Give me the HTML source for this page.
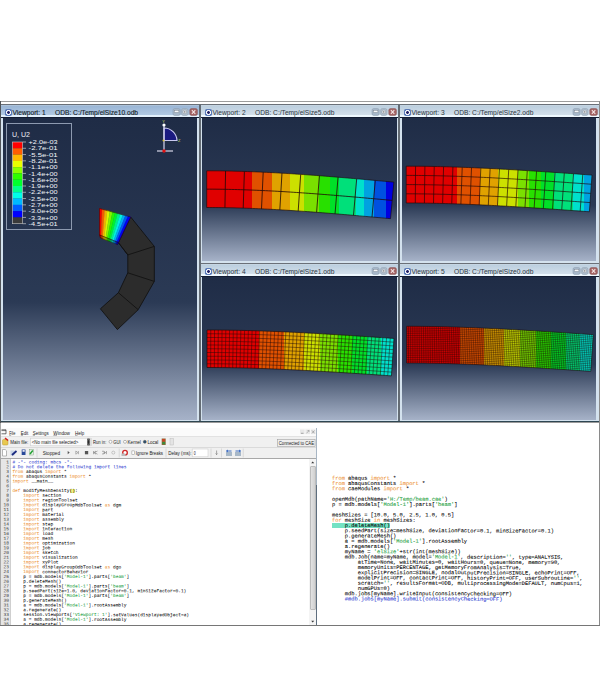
<!DOCTYPE html><html><head><meta charset="utf-8"><style>
*{box-sizing:border-box;margin:0;padding:0}
html,body{width:600px;height:687px;background:#fff;overflow:hidden;position:relative;font-family:"Liberation Sans",sans-serif}
.a{position:absolute}
.vp{position:absolute;background:#d4e2ee}
.tb{position:absolute;left:0;right:0;top:0;height:14px;border-top:1px solid #6a7078;background:linear-gradient(#d0dce6 0px,#bccfdf 1px,#d4e0eb 10.5px,#eef8ff 10.5px,#eef8ff 12px,#121c32 12px,#121c32 13px)}
.tb.act{background:linear-gradient(#c0d0e0 0px,#9ab6d6 1px,#b2cae3 10.5px,#e2f0fc 10.5px,#e2f0fc 12px,#121c32 12px,#121c32 13px)}
.tt{position:absolute;top:3.4px;font-size:6.65px;color:#2c3640;white-space:pre;line-height:9px}
.act .tt{color:#141c26;-webkit-text-stroke:0.12px #141c26}
.ic{position:absolute;left:3.5px;top:4px;width:7px;height:7px;border-radius:1.8px;background:radial-gradient(circle at 50% 50%,#24246a 0,#24246a 1.3px,#f4f6fa 1.5px,#f4f6fa 2.4px,#5a7ab8 2.8px)}
.bg{position:absolute;background:linear-gradient(#1f2c46 0%,#2b3a55 61%,#a6b2c8 100%);overflow:hidden}
.bg svg{position:absolute;left:0;top:0}
.code{position:absolute;font-family:"Liberation Mono",monospace;white-space:pre;color:#000;-webkit-text-stroke:0.4px}
.k{color:#e5821a}.c{color:#2438c8}.s{color:#1f9a3c}
.mn{position:absolute;font-size:5.6px;color:#222;white-space:pre;line-height:8px}
</style></head><body><div class="a" style="left:0;top:101px;width:600px;height:1px;background:#9c9c9c"></div><div class="a" style="left:0;top:101px;width:1px;height:322px;background:#505458"></div><div class="a" style="left:0;top:423px;width:1px;height:203px;background:#a8a8a8"></div><div class="a" style="left:599px;top:101px;width:1px;height:525px;background:#8a8a8a"></div><div class="a" style="left:199px;top:104px;width:2px;height:318px;background:#646c74"></div><div class="a" style="left:398px;top:104px;width:2px;height:318px;background:#646c74"></div><div class="vp" style="left:1px;top:104px;width:198px;height:318px"><div class="tb act"><div class="ic"></div><div class="tt" style="left:11.5px">Viewport: 1</div><div class="tt" style="left:54px">ODB: C:/Temp/elSize10.odb</div><svg class="a" style="left:0;top:-1px" width="198" height="14" viewBox="0 0 198 14"><rect x="172.0" y="4.6" width="7.2" height="6.8" rx="1.6" fill="#a7b8ca" stroke="#8797a8" stroke-width="0.5"/><rect x="173.3" y="6.3" width="4.6" height="2.2" fill="#f6f8fa" stroke="#6a7480" stroke-width="0.4"/><rect x="180.6" y="4.6" width="6.4" height="6.8" rx="1.6" fill="#b0bfce" stroke="#8d9cac" stroke-width="0.5"/><rect x="182.1" y="6.2" width="3.4" height="3.4" rx="0.8" fill="#eceff3" stroke="#7a8490" stroke-width="0.4"/><circle cx="183.8" cy="7.9" r="0.7" fill="#555"/><rect x="188.8" y="4.6" width="7.6" height="6.8" rx="1.6" fill="#a46464" stroke="#845050" stroke-width="0.5"/><path d="M190.9,6.2 L194.3,9.8 M194.3,6.2 L190.9,9.8" stroke="#f4e4e4" stroke-width="1.1"/></svg></div><div class="bg" style="left:2px;top:14px;width:194px;height:302px"><svg width="194" height="302" viewBox="3 118 194 302"><rect x="6.5" y="123.5" width="65" height="106" fill="none" stroke="#8d9ab0" stroke-width="1"/><text x="12" y="137" font-family="Liberation Sans" font-size="6.3" textLength="18" lengthAdjust="spacingAndGlyphs" fill="#eef0f6">U, U2</text><rect x="12.5" y="142.00" width="10" height="6.38" fill="#ff0000"/><rect x="12.5" y="148.28" width="10" height="6.38" fill="#ff5d00"/><rect x="12.5" y="154.57" width="10" height="6.38" fill="#ffb900"/><rect x="12.5" y="160.85" width="10" height="6.38" fill="#e8ff00"/><rect x="12.5" y="167.14" width="10" height="6.38" fill="#8bff00"/><rect x="12.5" y="173.42" width="10" height="6.38" fill="#2eff00"/><rect x="12.5" y="179.71" width="10" height="6.38" fill="#00ff2e"/><rect x="12.5" y="185.99" width="10" height="6.38" fill="#00ff8b"/><rect x="12.5" y="192.28" width="10" height="6.38" fill="#00ffe8"/><rect x="12.5" y="198.56" width="10" height="6.38" fill="#00b9ff"/><rect x="12.5" y="204.85" width="10" height="6.38" fill="#005dff"/><rect x="12.5" y="211.13" width="10" height="6.38" fill="#0000ff"/><rect x="12.5" y="217.42" width="10" height="6.38" fill="#3a3a3a"/><rect x="12.5" y="142.00" width="10" height="81.70" fill="none" stroke="#c8c8c8" stroke-width="0.6"/><line x1="22.5" y1="142.00" x2="26" y2="142.00" stroke="#e0e0e0" stroke-width="0.6"/><text x="28.6" y="144.20" font-family="Liberation Sans" font-size="6.1" textLength="29" lengthAdjust="spacingAndGlyphs" fill="#f2f4f8">+2.0e-03</text><line x1="22.5" y1="148.28" x2="26" y2="148.28" stroke="#e0e0e0" stroke-width="0.6"/><text x="28.6" y="150.48" font-family="Liberation Sans" font-size="6.1" textLength="29" lengthAdjust="spacingAndGlyphs" fill="#f2f4f8">-2.7e-01</text><line x1="22.5" y1="154.57" x2="26" y2="154.57" stroke="#e0e0e0" stroke-width="0.6"/><text x="28.6" y="156.77" font-family="Liberation Sans" font-size="6.1" textLength="29" lengthAdjust="spacingAndGlyphs" fill="#f2f4f8">-5.5e-01</text><line x1="22.5" y1="160.85" x2="26" y2="160.85" stroke="#e0e0e0" stroke-width="0.6"/><text x="28.6" y="163.05" font-family="Liberation Sans" font-size="6.1" textLength="29" lengthAdjust="spacingAndGlyphs" fill="#f2f4f8">-8.2e-01</text><line x1="22.5" y1="167.14" x2="26" y2="167.14" stroke="#e0e0e0" stroke-width="0.6"/><text x="28.6" y="169.34" font-family="Liberation Sans" font-size="6.1" textLength="29" lengthAdjust="spacingAndGlyphs" fill="#f2f4f8">-1.1e+00</text><line x1="22.5" y1="173.42" x2="26" y2="173.42" stroke="#e0e0e0" stroke-width="0.6"/><text x="28.6" y="175.62" font-family="Liberation Sans" font-size="6.1" textLength="29" lengthAdjust="spacingAndGlyphs" fill="#f2f4f8">-1.4e+00</text><line x1="22.5" y1="179.71" x2="26" y2="179.71" stroke="#e0e0e0" stroke-width="0.6"/><text x="28.6" y="181.91" font-family="Liberation Sans" font-size="6.1" textLength="29" lengthAdjust="spacingAndGlyphs" fill="#f2f4f8">-1.6e+00</text><line x1="22.5" y1="185.99" x2="26" y2="185.99" stroke="#e0e0e0" stroke-width="0.6"/><text x="28.6" y="188.19" font-family="Liberation Sans" font-size="6.1" textLength="29" lengthAdjust="spacingAndGlyphs" fill="#f2f4f8">-1.9e+00</text><line x1="22.5" y1="192.28" x2="26" y2="192.28" stroke="#e0e0e0" stroke-width="0.6"/><text x="28.6" y="194.48" font-family="Liberation Sans" font-size="6.1" textLength="29" lengthAdjust="spacingAndGlyphs" fill="#f2f4f8">-2.2e+00</text><line x1="22.5" y1="198.56" x2="26" y2="198.56" stroke="#e0e0e0" stroke-width="0.6"/><text x="28.6" y="200.76" font-family="Liberation Sans" font-size="6.1" textLength="29" lengthAdjust="spacingAndGlyphs" fill="#f2f4f8">-2.5e+00</text><line x1="22.5" y1="204.85" x2="26" y2="204.85" stroke="#e0e0e0" stroke-width="0.6"/><text x="28.6" y="207.05" font-family="Liberation Sans" font-size="6.1" textLength="29" lengthAdjust="spacingAndGlyphs" fill="#f2f4f8">-2.7e+00</text><line x1="22.5" y1="211.13" x2="26" y2="211.13" stroke="#e0e0e0" stroke-width="0.6"/><text x="28.6" y="213.33" font-family="Liberation Sans" font-size="6.1" textLength="29" lengthAdjust="spacingAndGlyphs" fill="#f2f4f8">-3.0e+00</text><line x1="22.5" y1="217.42" x2="26" y2="217.42" stroke="#e0e0e0" stroke-width="0.6"/><text x="28.6" y="219.62" font-family="Liberation Sans" font-size="6.1" textLength="29" lengthAdjust="spacingAndGlyphs" fill="#f2f4f8">-3.3e+00</text><line x1="22.5" y1="223.70" x2="26" y2="223.70" stroke="#e0e0e0" stroke-width="0.6"/><text x="28.6" y="225.90" font-family="Liberation Sans" font-size="6.1" textLength="29" lengthAdjust="spacingAndGlyphs" fill="#f2f4f8">-4.5e+01</text><path d="M164,140.5 L164,128 A13,13 0 0 1 177,140.5 Z" fill="#1a1a80" stroke="#c8c8f0" stroke-width="1.2"/><line x1="164" y1="125" x2="164" y2="151" stroke="#d8d8f0" stroke-width="1.2"/><line x1="157" y1="151" x2="173" y2="151" stroke="#d8d8e8" stroke-width="1.2"/><circle cx="164" cy="125" r="1.6" fill="#fff"/><circle cx="164" cy="151" r="1.7" fill="#e01010"/><circle cx="163.5" cy="140.5" r="1" fill="#d8c040"/><text x="162.3" y="122.5" font-family="Liberation Sans" font-size="4" fill="#d0d860">Y</text><text x="178" y="142.3" font-family="Liberation Sans" font-size="4" fill="#d0d860">Z</text><polygon points="130.7,217.0 154.3,246.4 154.3,281.4 138.2,309.7 117.4,329.6 100.4,308.8 118.4,292.7 127.8,272.8 127.8,254.9 118.4,242.6" fill="#2c2c2c" stroke="#121212" stroke-width="0.9"/><path d="M118.4,242.6 L127.8,254.9 L154.3,246.4 M127.8,272.8 L154.3,281.4 M118.4,292.7 L138.2,309.7" stroke="#121212" stroke-width="0.9" fill="none"/><polygon points="99.50,208.50 102.10,209.21 101.08,235.63 99.50,235.00" fill="#f20000" stroke="#f20000" stroke-width="0.3"/><polygon points="102.10,209.21 104.70,209.92 102.65,236.27 101.08,235.63" fill="#f25800" stroke="#f25800" stroke-width="0.3"/><polygon points="104.70,209.92 107.30,210.62 104.22,236.90 102.65,236.27" fill="#f2af00" stroke="#f2af00" stroke-width="0.3"/><polygon points="107.30,210.62 109.90,211.33 105.80,237.53 104.22,236.90" fill="#dcf200" stroke="#dcf200" stroke-width="0.3"/><polygon points="109.90,211.33 112.50,212.04 107.38,238.17 105.80,237.53" fill="#84f200" stroke="#84f200" stroke-width="0.3"/><polygon points="112.50,212.04 115.10,212.75 108.95,238.80 107.38,238.17" fill="#2bf200" stroke="#2bf200" stroke-width="0.3"/><polygon points="115.10,212.75 117.70,213.46 110.53,239.43 108.95,238.80" fill="#00f22b" stroke="#00f22b" stroke-width="0.3"/><polygon points="117.70,213.46 120.30,214.17 112.10,240.07 110.53,239.43" fill="#00f284" stroke="#00f284" stroke-width="0.3"/><polygon points="120.30,214.17 122.90,214.88 113.68,240.70 112.10,240.07" fill="#00f2dc" stroke="#00f2dc" stroke-width="0.3"/><polygon points="122.90,214.88 125.50,215.58 115.25,241.33 113.68,240.70" fill="#00aff2" stroke="#00aff2" stroke-width="0.3"/><polygon points="125.50,215.58 128.10,216.29 116.83,241.97 115.25,241.33" fill="#0058f2" stroke="#0058f2" stroke-width="0.3"/><polygon points="128.10,216.29 130.70,217.00 118.40,242.60 116.83,241.97" fill="#0000f2" stroke="#0000f2" stroke-width="0.3"/><polygon points="99.5,208.5 130.7,217 118.4,242.6 99.5,235" fill="none" stroke="#300" stroke-width="0.5"/><polygon points="99.50,235.00 101.08,235.63 101.74,238.37 100.30,237.80" fill="#b20000" stroke="#b20000" stroke-width="0.3"/><polygon points="101.08,235.63 102.65,236.27 103.18,238.93 101.74,238.37" fill="#b24100" stroke="#b24100" stroke-width="0.3"/><polygon points="102.65,236.27 104.22,236.90 104.62,239.50 103.18,238.93" fill="#b28100" stroke="#b28100" stroke-width="0.3"/><polygon points="104.22,236.90 105.80,237.53 106.07,240.07 104.62,239.50" fill="#a2b200" stroke="#a2b200" stroke-width="0.3"/><polygon points="105.80,237.53 107.38,238.17 107.51,240.63 106.07,240.07" fill="#61b200" stroke="#61b200" stroke-width="0.3"/><polygon points="107.38,238.17 108.95,238.80 108.95,241.20 107.51,240.63" fill="#20b200" stroke="#20b200" stroke-width="0.3"/><polygon points="108.95,238.80 110.53,239.43 110.39,241.77 108.95,241.20" fill="#00b220" stroke="#00b220" stroke-width="0.3"/><polygon points="110.53,239.43 112.10,240.07 111.83,242.33 110.39,241.77" fill="#00b261" stroke="#00b261" stroke-width="0.3"/><polygon points="112.10,240.07 113.68,240.70 113.27,242.90 111.83,242.33" fill="#00b2a2" stroke="#00b2a2" stroke-width="0.3"/><polygon points="113.68,240.70 115.25,241.33 114.72,243.47 113.27,242.90" fill="#0081b2" stroke="#0081b2" stroke-width="0.3"/><polygon points="115.25,241.33 116.83,241.97 116.16,244.03 114.72,243.47" fill="#0041b2" stroke="#0041b2" stroke-width="0.3"/><polygon points="116.83,241.97 118.40,242.60 117.60,244.60 116.16,244.03" fill="#0000b2" stroke="#0000b2" stroke-width="0.3"/><polygon points="99.5,235 118.4,242.6 117.6,244.6 100.3,237.8" fill="none" stroke="#200" stroke-width="0.4"/></svg></div></div><div class="vp" style="left:201px;top:104px;width:197px;height:159px"><div class="tb"><div class="ic"></div><div class="tt" style="left:11.5px">Viewport: 2</div><div class="tt" style="left:54px">ODB: C:/Temp/elSize5.odb</div><svg class="a" style="left:0;top:-1px" width="197" height="14" viewBox="0 0 197 14"><rect x="171.0" y="4.6" width="7.2" height="6.8" rx="1.6" fill="#a7b8ca" stroke="#8797a8" stroke-width="0.5"/><rect x="172.3" y="6.3" width="4.6" height="2.2" fill="#f6f8fa" stroke="#6a7480" stroke-width="0.4"/><rect x="179.6" y="4.6" width="6.4" height="6.8" rx="1.6" fill="#b0bfce" stroke="#8d9cac" stroke-width="0.5"/><rect x="181.1" y="6.2" width="3.4" height="3.4" rx="0.8" fill="#eceff3" stroke="#7a8490" stroke-width="0.4"/><circle cx="182.8" cy="7.9" r="0.7" fill="#555"/><rect x="187.8" y="4.6" width="7.6" height="6.8" rx="1.6" fill="#a46464" stroke="#845050" stroke-width="0.5"/><path d="M189.9,6.2 L193.3,9.8 M193.3,6.2 L189.9,9.8" stroke="#f4e4e4" stroke-width="1.1"/></svg></div><div class="bg" style="left:1px;top:14px;width:195px;height:143px"><svg width="195" height="143" viewBox="202 118 195 143"><defs><linearGradient id="g2" gradientUnits="userSpaceOnUse" x1="206.7" y1="0" x2="392.2" y2="0"><stop offset="0.0000" stop-color="#e00000"/><stop offset="0.2426" stop-color="#e00000"/><stop offset="0.2426" stop-color="#e05100"/><stop offset="0.3547" stop-color="#e05100"/><stop offset="0.3547" stop-color="#e0a200"/><stop offset="0.4491" stop-color="#e0a200"/><stop offset="0.4491" stop-color="#cce000"/><stop offset="0.5235" stop-color="#cce000"/><stop offset="0.5235" stop-color="#7ae000"/><stop offset="0.6075" stop-color="#7ae000"/><stop offset="0.6075" stop-color="#28e000"/><stop offset="0.6620" stop-color="#28e000"/><stop offset="0.6620" stop-color="#00e028"/><stop offset="0.7159" stop-color="#00e028"/><stop offset="0.7159" stop-color="#00e07a"/><stop offset="0.8049" stop-color="#00e07a"/><stop offset="0.8049" stop-color="#00e0cc"/><stop offset="0.8480" stop-color="#00e0cc"/><stop offset="0.8480" stop-color="#00a2e0"/><stop offset="0.9019" stop-color="#00a2e0"/><stop offset="0.9019" stop-color="#0051e0"/><stop offset="0.9666" stop-color="#0051e0"/><stop offset="0.9666" stop-color="#0000e0"/><stop offset="1.0000" stop-color="#0000e0"/></linearGradient></defs><path d="M206.70,170.80 L209.85,170.80 L212.99,170.82 L216.14,170.84 L219.28,170.87 L222.42,170.92 L225.57,170.97 L228.71,171.02 L231.85,171.09 L234.99,171.17 L238.13,171.25 L241.26,171.34 L244.40,171.44 L247.54,171.55 L250.67,171.66 L253.80,171.78 L256.94,171.91 L260.07,172.04 L263.20,172.19 L266.33,172.34 L269.46,172.49 L272.59,172.65 L275.71,172.82 L278.84,172.99 L281.97,173.17 L285.09,173.36 L288.21,173.55 L291.34,173.74 L294.46,173.94 L297.58,174.15 L300.70,174.36 L303.82,174.57 L306.94,174.79 L310.05,175.02 L313.17,175.25 L316.28,175.48 L319.40,175.71 L322.51,175.95 L325.62,176.20 L328.74,176.44 L331.85,176.69 L334.96,176.95 L338.06,177.20 L341.17,177.46 L344.28,177.72 L347.38,177.99 L350.49,178.25 L353.59,178.52 L356.70,178.79 L359.80,179.06 L362.90,179.33 L366.00,179.61 L369.10,179.89 L372.20,180.16 L375.30,180.44 L378.39,180.72 L381.49,181.00 L384.58,181.28 L387.68,181.56 L390.77,181.84 L393.86,182.13 L390.54,218.67 L387.45,218.39 L384.36,218.11 L381.27,217.83 L378.18,217.55 L375.09,217.27 L372.00,216.99 L368.92,216.72 L365.83,216.44 L362.75,216.17 L359.67,215.89 L356.58,215.62 L353.50,215.35 L350.42,215.08 L347.34,214.82 L344.27,214.55 L341.19,214.29 L338.11,214.03 L335.04,213.78 L331.96,213.52 L328.89,213.27 L325.81,213.03 L322.74,212.78 L319.67,212.54 L316.60,212.31 L313.53,212.07 L310.46,211.85 L307.40,211.62 L304.33,211.40 L301.27,211.18 L298.20,210.97 L295.14,210.77 L292.07,210.56 L289.01,210.37 L285.95,210.18 L282.89,209.99 L279.83,209.81 L276.78,209.63 L273.72,209.46 L270.66,209.30 L267.61,209.14 L264.55,208.99 L261.50,208.85 L258.45,208.71 L255.40,208.58 L252.35,208.45 L249.30,208.33 L246.25,208.22 L243.20,208.12 L240.15,208.02 L237.11,207.94 L234.06,207.85 L231.02,207.78 L227.97,207.72 L224.93,207.66 L221.89,207.61 L218.85,207.57 L215.81,207.54 L212.77,207.52 L209.74,207.50 L206.70,207.50Z" fill="url(#g2)"/><path d="M225.57,170.97L224.93,207.66M244.40,171.44L243.20,208.12M263.20,172.19L261.50,208.85M281.97,173.17L279.83,209.81M300.70,174.36L298.20,210.97M319.40,175.71L316.60,212.31M338.06,177.20L335.04,213.78M356.70,178.79L353.50,215.35M375.30,180.44L372.00,216.99M206.70,189.15 L209.79,189.15 L212.88,189.17 L215.97,189.19 L219.07,189.22 L222.16,189.26 L225.25,189.31 L228.34,189.37 L231.43,189.44 L234.52,189.51 L237.62,189.59 L240.71,189.68 L243.80,189.78 L246.89,189.88 L249.98,190.00 L253.07,190.12 L256.17,190.24 L259.26,190.38 L262.35,190.52 L265.44,190.66 L268.53,190.82 L271.62,190.98 L274.72,191.14 L277.81,191.31 L280.90,191.49 L283.99,191.67 L287.08,191.86 L290.18,192.05 L293.27,192.25 L296.36,192.46 L299.45,192.67 L302.54,192.88 L305.63,193.10 L308.73,193.32 L311.82,193.55 L314.91,193.78 L318.00,194.01 L321.09,194.25 L324.18,194.49 L327.27,194.73 L330.37,194.98 L333.46,195.23 L336.55,195.49 L339.64,195.75 L342.73,196.01 L345.82,196.27 L348.92,196.53 L352.01,196.80 L355.10,197.07 L358.19,197.34 L361.28,197.61 L364.38,197.89 L367.47,198.16 L370.56,198.44 L373.65,198.72 L376.74,199.00 L379.83,199.28 L382.92,199.56 L386.02,199.84 L389.11,200.12 L392.20,200.40" fill="none" stroke="#200808" stroke-width="0.90" stroke-opacity="0.90"/><path d="M206.70,170.80 L209.85,170.80 L212.99,170.82 L216.14,170.84 L219.28,170.87 L222.42,170.92 L225.57,170.97 L228.71,171.02 L231.85,171.09 L234.99,171.17 L238.13,171.25 L241.26,171.34 L244.40,171.44 L247.54,171.55 L250.67,171.66 L253.80,171.78 L256.94,171.91 L260.07,172.04 L263.20,172.19 L266.33,172.34 L269.46,172.49 L272.59,172.65 L275.71,172.82 L278.84,172.99 L281.97,173.17 L285.09,173.36 L288.21,173.55 L291.34,173.74 L294.46,173.94 L297.58,174.15 L300.70,174.36 L303.82,174.57 L306.94,174.79 L310.05,175.02 L313.17,175.25 L316.28,175.48 L319.40,175.71 L322.51,175.95 L325.62,176.20 L328.74,176.44 L331.85,176.69 L334.96,176.95 L338.06,177.20 L341.17,177.46 L344.28,177.72 L347.38,177.99 L350.49,178.25 L353.59,178.52 L356.70,178.79 L359.80,179.06 L362.90,179.33 L366.00,179.61 L369.10,179.89 L372.20,180.16 L375.30,180.44 L378.39,180.72 L381.49,181.00 L384.58,181.28 L387.68,181.56 L390.77,181.84 L393.86,182.13 L390.54,218.67 L387.45,218.39 L384.36,218.11 L381.27,217.83 L378.18,217.55 L375.09,217.27 L372.00,216.99 L368.92,216.72 L365.83,216.44 L362.75,216.17 L359.67,215.89 L356.58,215.62 L353.50,215.35 L350.42,215.08 L347.34,214.82 L344.27,214.55 L341.19,214.29 L338.11,214.03 L335.04,213.78 L331.96,213.52 L328.89,213.27 L325.81,213.03 L322.74,212.78 L319.67,212.54 L316.60,212.31 L313.53,212.07 L310.46,211.85 L307.40,211.62 L304.33,211.40 L301.27,211.18 L298.20,210.97 L295.14,210.77 L292.07,210.56 L289.01,210.37 L285.95,210.18 L282.89,209.99 L279.83,209.81 L276.78,209.63 L273.72,209.46 L270.66,209.30 L267.61,209.14 L264.55,208.99 L261.50,208.85 L258.45,208.71 L255.40,208.58 L252.35,208.45 L249.30,208.33 L246.25,208.22 L243.20,208.12 L240.15,208.02 L237.11,207.94 L234.06,207.85 L231.02,207.78 L227.97,207.72 L224.93,207.66 L221.89,207.61 L218.85,207.57 L215.81,207.54 L212.77,207.52 L209.74,207.50 L206.70,207.50Z" fill="none" stroke="#1a0a0a" stroke-width="0.8" stroke-opacity="0.8"/></svg></div></div><div class="vp" style="left:400px;top:104px;width:199px;height:159px"><div class="tb"><div class="ic"></div><div class="tt" style="left:11.5px">Viewport: 3</div><div class="tt" style="left:54px">ODB: C:/Temp/elSize2.odb</div><svg class="a" style="left:0;top:-1px" width="199" height="14" viewBox="0 0 199 14"><rect x="173.0" y="4.6" width="7.2" height="6.8" rx="1.6" fill="#a7b8ca" stroke="#8797a8" stroke-width="0.5"/><rect x="174.3" y="6.3" width="4.6" height="2.2" fill="#f6f8fa" stroke="#6a7480" stroke-width="0.4"/><rect x="181.6" y="4.6" width="6.4" height="6.8" rx="1.6" fill="#b0bfce" stroke="#8d9cac" stroke-width="0.5"/><rect x="183.1" y="6.2" width="3.4" height="3.4" rx="0.8" fill="#eceff3" stroke="#7a8490" stroke-width="0.4"/><circle cx="184.8" cy="7.9" r="0.7" fill="#555"/><rect x="189.8" y="4.6" width="7.6" height="6.8" rx="1.6" fill="#a46464" stroke="#845050" stroke-width="0.5"/><path d="M191.9,6.2 L195.3,9.8 M195.3,6.2 L191.9,9.8" stroke="#f4e4e4" stroke-width="1.1"/></svg></div><div class="bg" style="left:2px;top:14px;width:194px;height:143px"><svg width="194" height="143" viewBox="402 118 194 143"><defs><linearGradient id="g3" gradientUnits="userSpaceOnUse" x1="406.2" y1="0" x2="590.7" y2="0"><stop offset="0.0000" stop-color="#e00000"/><stop offset="0.2737" stop-color="#e00000"/><stop offset="0.2737" stop-color="#e05100"/><stop offset="0.4000" stop-color="#e05100"/><stop offset="0.4000" stop-color="#e0a200"/><stop offset="0.4992" stop-color="#e0a200"/><stop offset="0.4992" stop-color="#cce000"/><stop offset="0.6033" stop-color="#cce000"/><stop offset="0.6033" stop-color="#7ae000"/><stop offset="0.6629" stop-color="#7ae000"/><stop offset="0.6629" stop-color="#28e000"/><stop offset="0.7306" stop-color="#28e000"/><stop offset="0.7306" stop-color="#00e028"/><stop offset="0.8011" stop-color="#00e028"/><stop offset="0.8011" stop-color="#00e07a"/><stop offset="0.9019" stop-color="#00e07a"/><stop offset="0.9019" stop-color="#00e0cc"/><stop offset="0.9615" stop-color="#00e0cc"/><stop offset="0.9615" stop-color="#00a2e0"/><stop offset="1.0000" stop-color="#00a2e0"/></linearGradient></defs><path d="M406.20,166.20 L409.32,166.20 L412.44,166.21 L415.55,166.23 L418.67,166.26 L421.79,166.29 L424.90,166.33 L428.01,166.37 L431.13,166.43 L434.24,166.49 L437.35,166.55 L440.46,166.62 L443.57,166.70 L446.68,166.78 L449.79,166.87 L452.90,166.97 L456.01,167.07 L459.11,167.17 L462.22,167.28 L465.33,167.40 L468.43,167.52 L471.53,167.64 L474.64,167.77 L477.74,167.91 L480.84,168.05 L483.94,168.19 L487.04,168.34 L490.14,168.49 L493.24,168.65 L496.34,168.81 L499.44,168.98 L502.53,169.14 L505.63,169.32 L508.72,169.49 L511.82,169.67 L514.91,169.85 L518.00,170.03 L521.10,170.22 L524.19,170.41 L527.28,170.60 L530.37,170.80 L533.46,171.00 L536.55,171.20 L539.63,171.40 L542.72,171.60 L545.81,171.81 L548.89,172.02 L551.98,172.23 L555.06,172.44 L558.14,172.65 L561.23,172.86 L564.31,173.08 L567.39,173.30 L570.47,173.51 L573.55,173.73 L576.63,173.95 L579.71,174.17 L582.78,174.39 L585.86,174.61 L588.94,174.83 L592.01,175.05 L589.39,211.75 L586.31,211.53 L583.24,211.31 L580.17,211.09 L577.09,210.87 L574.02,210.66 L570.95,210.44 L567.88,210.22 L564.81,210.01 L561.74,209.79 L558.67,209.58 L555.61,209.36 L552.54,209.15 L549.47,208.94 L546.41,208.73 L543.34,208.53 L540.28,208.32 L537.22,208.12 L534.15,207.92 L531.09,207.72 L528.03,207.53 L524.97,207.33 L521.91,207.14 L518.85,206.95 L515.80,206.77 L512.74,206.59 L509.68,206.41 L506.63,206.23 L503.57,206.06 L500.52,205.89 L497.46,205.72 L494.41,205.56 L491.36,205.40 L488.31,205.25 L485.26,205.10 L482.21,204.95 L479.16,204.81 L476.11,204.67 L473.06,204.54 L470.02,204.41 L466.97,204.29 L463.92,204.17 L460.88,204.06 L457.84,203.95 L454.79,203.85 L451.75,203.75 L448.71,203.65 L445.67,203.57 L442.63,203.49 L439.59,203.41 L436.55,203.34 L433.51,203.28 L430.47,203.22 L427.44,203.17 L424.40,203.13 L421.36,203.09 L418.33,203.06 L415.30,203.03 L412.26,203.01 L409.23,203.00 L406.20,203.00Z" fill="url(#g3)"/><path d="M415.55,166.23L415.30,203.03M424.90,166.33L424.40,203.13M434.24,166.49L433.51,203.28M443.57,166.70L442.63,203.49M452.90,166.97L451.75,203.75M462.22,167.28L460.88,204.06M471.53,167.64L470.02,204.41M480.84,168.05L479.16,204.81M490.14,168.49L488.31,205.25M499.44,168.98L497.46,205.72M508.72,169.49L506.63,206.23M518.00,170.03L515.80,206.77M527.28,170.60L524.97,207.33M536.55,171.20L534.15,207.92M545.81,171.81L543.34,208.53M555.06,172.44L552.54,209.15M564.31,173.08L561.74,209.79M573.55,173.73L570.95,210.44M582.78,174.39L580.17,211.09M406.20,175.40 L409.30,175.40 L412.39,175.41 L415.49,175.43 L418.58,175.46 L421.68,175.49 L424.78,175.53 L427.87,175.57 L430.96,175.63 L434.06,175.68 L437.15,175.75 L440.24,175.82 L443.34,175.90 L446.43,175.98 L449.52,176.07 L452.61,176.16 L455.70,176.26 L458.79,176.37 L461.89,176.48 L464.98,176.59 L468.07,176.71 L471.15,176.84 L474.24,176.97 L477.33,177.10 L480.42,177.24 L483.51,177.38 L486.60,177.53 L489.68,177.68 L492.77,177.84 L495.86,178.00 L498.94,178.16 L502.03,178.33 L505.11,178.50 L508.20,178.68 L511.28,178.85 L514.37,179.03 L517.45,179.22 L520.54,179.40 L523.62,179.59 L526.70,179.79 L529.78,179.98 L532.87,180.18 L535.95,180.38 L539.03,180.58 L542.11,180.78 L545.19,180.99 L548.27,181.20 L551.35,181.41 L554.43,181.62 L557.51,181.83 L560.59,182.04 L563.67,182.26 L566.74,182.47 L569.82,182.69 L572.90,182.91 L575.98,183.13 L579.05,183.34 L582.13,183.56 L585.21,183.78 L588.28,184.00 L591.36,184.22M406.20,184.60 L409.27,184.60 L412.35,184.61 L415.43,184.63 L418.50,184.66 L421.57,184.69 L424.65,184.73 L427.72,184.77 L430.80,184.82 L433.88,184.88 L436.95,184.95 L440.02,185.02 L443.10,185.09 L446.18,185.17 L449.25,185.26 L452.32,185.36 L455.40,185.46 L458.47,185.56 L461.55,185.67 L464.62,185.78 L467.70,185.90 L470.77,186.03 L473.85,186.16 L476.93,186.29 L480.00,186.43 L483.07,186.57 L486.15,186.72 L489.23,186.87 L492.30,187.03 L495.38,187.19 L498.45,187.35 L501.52,187.52 L504.60,187.69 L507.68,187.86 L510.75,188.04 L513.83,188.22 L516.90,188.40 L519.98,188.59 L523.05,188.78 L526.12,188.97 L529.20,189.16 L532.27,189.36 L535.35,189.56 L538.42,189.76 L541.50,189.96 L544.58,190.17 L547.65,190.38 L550.73,190.58 L553.80,190.80 L556.88,191.01 L559.95,191.22 L563.02,191.43 L566.10,191.65 L569.17,191.87 L572.25,192.08 L575.33,192.30 L578.40,192.52 L581.48,192.74 L584.55,192.96 L587.62,193.18 L590.70,193.40M406.20,193.80 L409.25,193.80 L412.31,193.81 L415.36,193.83 L418.42,193.86 L421.47,193.89 L424.52,193.93 L427.58,193.97 L430.64,194.02 L433.69,194.08 L436.75,194.14 L439.81,194.21 L442.86,194.29 L445.92,194.37 L448.98,194.46 L452.04,194.55 L455.10,194.65 L458.16,194.75 L461.21,194.86 L464.27,194.98 L467.33,195.10 L470.40,195.22 L473.46,195.35 L476.52,195.48 L479.58,195.62 L482.64,195.76 L485.70,195.91 L488.77,196.06 L491.83,196.22 L494.89,196.37 L497.96,196.54 L501.02,196.70 L504.09,196.87 L507.15,197.05 L510.22,197.22 L513.28,197.40 L516.35,197.59 L519.41,197.77 L522.48,197.96 L525.55,198.15 L528.62,198.34 L531.68,198.54 L534.75,198.74 L537.82,198.94 L540.89,199.14 L543.96,199.35 L547.03,199.55 L550.10,199.76 L553.17,199.97 L556.24,200.19 L559.31,200.40 L562.38,200.61 L565.46,200.83 L568.53,201.04 L571.60,201.26 L574.67,201.48 L577.75,201.70 L580.82,201.92 L583.89,202.14 L586.97,202.36 L590.04,202.58" fill="none" stroke="#200808" stroke-width="0.80" stroke-opacity="0.85"/><path d="M406.20,166.20 L409.32,166.20 L412.44,166.21 L415.55,166.23 L418.67,166.26 L421.79,166.29 L424.90,166.33 L428.01,166.37 L431.13,166.43 L434.24,166.49 L437.35,166.55 L440.46,166.62 L443.57,166.70 L446.68,166.78 L449.79,166.87 L452.90,166.97 L456.01,167.07 L459.11,167.17 L462.22,167.28 L465.33,167.40 L468.43,167.52 L471.53,167.64 L474.64,167.77 L477.74,167.91 L480.84,168.05 L483.94,168.19 L487.04,168.34 L490.14,168.49 L493.24,168.65 L496.34,168.81 L499.44,168.98 L502.53,169.14 L505.63,169.32 L508.72,169.49 L511.82,169.67 L514.91,169.85 L518.00,170.03 L521.10,170.22 L524.19,170.41 L527.28,170.60 L530.37,170.80 L533.46,171.00 L536.55,171.20 L539.63,171.40 L542.72,171.60 L545.81,171.81 L548.89,172.02 L551.98,172.23 L555.06,172.44 L558.14,172.65 L561.23,172.86 L564.31,173.08 L567.39,173.30 L570.47,173.51 L573.55,173.73 L576.63,173.95 L579.71,174.17 L582.78,174.39 L585.86,174.61 L588.94,174.83 L592.01,175.05 L589.39,211.75 L586.31,211.53 L583.24,211.31 L580.17,211.09 L577.09,210.87 L574.02,210.66 L570.95,210.44 L567.88,210.22 L564.81,210.01 L561.74,209.79 L558.67,209.58 L555.61,209.36 L552.54,209.15 L549.47,208.94 L546.41,208.73 L543.34,208.53 L540.28,208.32 L537.22,208.12 L534.15,207.92 L531.09,207.72 L528.03,207.53 L524.97,207.33 L521.91,207.14 L518.85,206.95 L515.80,206.77 L512.74,206.59 L509.68,206.41 L506.63,206.23 L503.57,206.06 L500.52,205.89 L497.46,205.72 L494.41,205.56 L491.36,205.40 L488.31,205.25 L485.26,205.10 L482.21,204.95 L479.16,204.81 L476.11,204.67 L473.06,204.54 L470.02,204.41 L466.97,204.29 L463.92,204.17 L460.88,204.06 L457.84,203.95 L454.79,203.85 L451.75,203.75 L448.71,203.65 L445.67,203.57 L442.63,203.49 L439.59,203.41 L436.55,203.34 L433.51,203.28 L430.47,203.22 L427.44,203.17 L424.40,203.13 L421.36,203.09 L418.33,203.06 L415.30,203.03 L412.26,203.01 L409.23,203.00 L406.20,203.00Z" fill="none" stroke="#1a0a0a" stroke-width="0.8" stroke-opacity="0.8"/></svg></div></div><div class="vp" style="left:201px;top:263px;width:197px;height:159px"><div class="tb"><div class="ic"></div><div class="tt" style="left:11.5px">Viewport: 4</div><div class="tt" style="left:54px">ODB: C:/Temp/elSize1.odb</div><svg class="a" style="left:0;top:-1px" width="197" height="14" viewBox="0 0 197 14"><rect x="171.0" y="4.6" width="7.2" height="6.8" rx="1.6" fill="#a7b8ca" stroke="#8797a8" stroke-width="0.5"/><rect x="172.3" y="6.3" width="4.6" height="2.2" fill="#f6f8fa" stroke="#6a7480" stroke-width="0.4"/><rect x="179.6" y="4.6" width="6.4" height="6.8" rx="1.6" fill="#b0bfce" stroke="#8d9cac" stroke-width="0.5"/><rect x="181.1" y="6.2" width="3.4" height="3.4" rx="0.8" fill="#eceff3" stroke="#7a8490" stroke-width="0.4"/><circle cx="182.8" cy="7.9" r="0.7" fill="#555"/><rect x="187.8" y="4.6" width="7.6" height="6.8" rx="1.6" fill="#a46464" stroke="#845050" stroke-width="0.5"/><path d="M189.9,6.2 L193.3,9.8 M193.3,6.2 L189.9,9.8" stroke="#f4e4e4" stroke-width="1.1"/></svg></div><div class="bg" style="left:1px;top:14px;width:195px;height:143px"><svg width="195" height="143" viewBox="202 277 195 143"><defs><linearGradient id="g4" gradientUnits="userSpaceOnUse" x1="207.0" y1="0" x2="392.7" y2="0"><stop offset="0.0000" stop-color="#e00000"/><stop offset="0.2800" stop-color="#e00000"/><stop offset="0.2800" stop-color="#e05100"/><stop offset="0.4146" stop-color="#e05100"/><stop offset="0.4146" stop-color="#e0a200"/><stop offset="0.5213" stop-color="#e0a200"/><stop offset="0.5213" stop-color="#cce000"/><stop offset="0.6101" stop-color="#cce000"/><stop offset="0.6101" stop-color="#7ae000"/><stop offset="0.7038" stop-color="#7ae000"/><stop offset="0.7038" stop-color="#28e000"/><stop offset="0.7808" stop-color="#28e000"/><stop offset="0.7808" stop-color="#00e028"/><stop offset="0.8616" stop-color="#00e028"/><stop offset="0.8616" stop-color="#00e07a"/><stop offset="0.9359" stop-color="#00e07a"/><stop offset="0.9359" stop-color="#00e0cc"/><stop offset="1.0000" stop-color="#00e0cc"/></linearGradient></defs><path d="M207.00,330.00 L210.14,330.00 L213.27,330.01 L216.41,330.03 L219.54,330.06 L222.68,330.09 L225.81,330.12 L228.94,330.17 L232.08,330.22 L235.21,330.27 L238.34,330.33 L241.47,330.40 L244.60,330.48 L247.73,330.56 L250.85,330.64 L253.98,330.73 L257.11,330.83 L260.23,330.93 L263.36,331.03 L266.48,331.14 L269.61,331.26 L272.73,331.38 L275.85,331.50 L278.97,331.63 L282.09,331.76 L285.21,331.90 L288.33,332.04 L291.45,332.19 L294.57,332.34 L297.69,332.49 L300.80,332.65 L303.92,332.81 L307.03,332.97 L310.15,333.14 L313.26,333.31 L316.37,333.48 L319.49,333.66 L322.60,333.84 L325.71,334.02 L328.82,334.20 L331.93,334.39 L335.04,334.58 L338.15,334.77 L341.25,334.96 L344.36,335.16 L347.47,335.35 L350.57,335.55 L353.67,335.75 L356.78,335.95 L359.88,336.16 L362.98,336.36 L366.09,336.57 L369.19,336.77 L372.29,336.98 L375.39,337.19 L378.49,337.39 L381.58,337.60 L384.68,337.81 L387.78,338.02 L390.87,338.23 L393.97,338.44 L391.43,375.86 L388.34,375.65 L385.24,375.44 L382.15,375.23 L379.06,375.02 L375.96,374.81 L372.87,374.60 L369.78,374.39 L366.69,374.19 L363.60,373.98 L360.52,373.78 L357.43,373.58 L354.34,373.37 L351.26,373.17 L348.17,372.97 L345.08,372.78 L342.00,372.58 L338.92,372.39 L335.83,372.20 L332.75,372.01 L329.67,371.82 L326.59,371.64 L323.51,371.45 L320.43,371.28 L317.35,371.10 L314.28,370.92 L311.20,370.75 L308.12,370.59 L305.05,370.42 L301.97,370.26 L298.90,370.10 L295.82,369.95 L292.75,369.80 L289.68,369.65 L286.61,369.50 L283.54,369.36 L280.47,369.23 L277.40,369.10 L274.33,368.97 L271.26,368.85 L268.19,368.73 L265.13,368.62 L262.06,368.51 L259.00,368.41 L255.93,368.31 L252.87,368.21 L249.81,368.13 L246.74,368.04 L243.68,367.96 L240.62,367.89 L237.56,367.83 L234.50,367.77 L231.44,367.71 L228.39,367.66 L225.33,367.62 L222.27,367.58 L219.22,367.55 L216.16,367.53 L213.11,367.51 L210.05,367.50 L207.00,367.50Z" fill="url(#g4)"/><path d="M210.76,330.01L210.66,367.50M214.53,330.02L214.33,367.52M218.29,330.05L217.99,367.54M222.05,330.08L221.66,367.58M225.81,330.12L225.33,367.62M229.57,330.18L229.00,367.67M233.33,330.24L232.67,367.73M237.09,330.31L236.34,367.80M240.84,330.39L240.01,367.88M244.60,330.48L243.68,367.96M248.35,330.57L247.36,368.06M252.11,330.68L251.03,368.16M255.86,330.79L254.71,368.27M259.61,330.91L258.38,368.39M263.36,331.03L262.06,368.51M267.11,331.17L265.74,368.64M270.86,331.31L269.42,368.78M274.60,331.45L273.10,368.92M278.35,331.61L276.78,369.07M282.09,331.76L280.47,369.23M285.84,331.93L284.15,369.39M289.58,332.10L287.84,369.56M293.32,332.28L291.52,369.74M297.06,332.46L295.21,369.92M300.80,332.65L298.90,370.10M304.54,332.84L302.59,370.29M308.28,333.04L306.28,370.49M312.02,333.24L309.97,370.69M315.75,333.45L313.66,370.89M319.49,333.66L317.35,371.10M323.22,333.87L321.05,371.31M326.95,334.09L324.74,371.53M330.69,334.31L328.44,371.75M334.42,334.54L332.14,371.97M338.15,334.77L335.83,372.20M341.87,335.00L339.53,372.43M345.60,335.24L343.23,372.66M349.33,335.47L346.94,372.90M353.05,335.71L350.64,373.13M356.78,335.95L354.34,373.37M360.50,336.20L358.05,373.62M364.22,336.44L361.75,373.86M367.95,336.69L365.46,374.11M371.67,336.94L369.16,374.35M375.39,337.19L372.87,374.60M379.11,337.44L376.58,374.85M382.82,337.69L380.29,375.10M386.54,337.94L384.00,375.35M390.25,338.19L387.72,375.61M207.00,333.75 L210.13,333.75 L213.26,333.76 L216.38,333.78 L219.51,333.81 L222.64,333.84 L225.76,333.87 L228.89,333.92 L232.01,333.97 L235.14,334.02 L238.26,334.08 L241.38,334.15 L244.51,334.22 L247.63,334.30 L250.75,334.39 L253.87,334.48 L256.99,334.57 L260.11,334.67 L263.23,334.78 L266.35,334.89 L269.47,335.01 L272.58,335.12 L275.70,335.25 L278.82,335.38 L281.93,335.51 L285.05,335.65 L288.16,335.79 L291.27,335.94 L294.39,336.08 L297.50,336.24 L300.61,336.39 L303.72,336.55 L306.84,336.72 L309.95,336.88 L313.06,337.05 L316.16,337.23 L319.27,337.40 L322.38,337.58 L325.49,337.76 L328.60,337.95 L331.70,338.13 L334.81,338.32 L337.91,338.51 L341.02,338.70 L344.12,338.90 L347.23,339.10 L350.33,339.29 L353.43,339.49 L356.53,339.70 L359.64,339.90 L362.74,340.10 L365.84,340.31 L368.94,340.51 L372.04,340.72 L375.14,340.93 L378.23,341.14 L381.33,341.35 L384.43,341.55 L387.52,341.76 L390.62,341.97 L393.72,342.18M207.00,337.50 L210.12,337.50 L213.24,337.51 L216.36,337.53 L219.48,337.56 L222.60,337.59 L225.72,337.62 L228.83,337.67 L231.95,337.72 L235.07,337.77 L238.18,337.83 L241.30,337.90 L244.41,337.97 L247.53,338.05 L250.64,338.14 L253.76,338.23 L256.87,338.32 L259.99,338.42 L263.10,338.53 L266.21,338.64 L269.32,338.75 L272.44,338.87 L275.55,339.00 L278.66,339.12 L281.77,339.26 L284.88,339.39 L287.99,339.54 L291.10,339.68 L294.21,339.83 L297.31,339.98 L300.42,340.14 L303.53,340.30 L306.64,340.46 L309.74,340.63 L312.85,340.80 L315.95,340.97 L319.06,341.15 L322.17,341.33 L325.27,341.51 L328.37,341.69 L331.48,341.88 L334.58,342.06 L337.68,342.25 L340.79,342.45 L343.89,342.64 L346.99,342.84 L350.09,343.04 L353.19,343.24 L356.29,343.44 L359.39,343.64 L362.49,343.84 L365.59,344.05 L368.69,344.25 L371.79,344.46 L374.88,344.67 L377.98,344.88 L381.08,345.09 L384.17,345.30 L387.27,345.51 L390.37,345.72 L393.46,345.93M207.00,341.25 L210.11,341.25 L213.22,341.26 L216.33,341.28 L219.45,341.31 L222.56,341.34 L225.67,341.37 L228.78,341.42 L231.89,341.47 L235.00,341.52 L238.11,341.58 L241.21,341.65 L244.32,341.72 L247.43,341.80 L250.54,341.89 L253.65,341.98 L256.76,342.07 L259.86,342.17 L262.97,342.28 L266.08,342.39 L269.18,342.50 L272.29,342.62 L275.39,342.74 L278.50,342.87 L281.61,343.00 L284.71,343.14 L287.82,343.28 L290.92,343.43 L294.02,343.58 L297.13,343.73 L300.23,343.88 L303.33,344.04 L306.44,344.21 L309.54,344.37 L312.64,344.54 L315.74,344.72 L318.85,344.89 L321.95,345.07 L325.05,345.25 L328.15,345.43 L331.25,345.62 L334.35,345.81 L337.45,346.00 L340.55,346.19 L343.65,346.38 L346.75,346.58 L349.85,346.78 L352.95,346.98 L356.05,347.18 L359.15,347.38 L362.24,347.59 L365.34,347.79 L368.44,348.00 L371.54,348.20 L374.63,348.41 L377.73,348.62 L380.83,348.83 L383.92,349.04 L387.02,349.25 L390.11,349.46 L393.21,349.67M207.00,345.00 L210.10,345.00 L213.21,345.01 L216.31,345.03 L219.41,345.05 L222.52,345.09 L225.62,345.12 L228.72,345.17 L231.82,345.21 L234.93,345.27 L238.03,345.33 L241.13,345.40 L244.23,345.47 L247.33,345.55 L250.43,345.63 L253.54,345.72 L256.64,345.82 L259.74,345.92 L262.84,346.02 L265.94,346.13 L269.04,346.25 L272.14,346.37 L275.24,346.49 L278.34,346.62 L281.44,346.75 L284.54,346.89 L287.64,347.03 L290.74,347.17 L293.84,347.32 L296.94,347.47 L300.04,347.63 L303.14,347.79 L306.24,347.95 L309.34,348.12 L312.44,348.29 L315.53,348.46 L318.63,348.63 L321.73,348.81 L324.83,348.99 L327.93,349.18 L331.03,349.36 L334.12,349.55 L337.22,349.74 L340.32,349.93 L343.42,350.13 L346.51,350.32 L349.61,350.52 L352.71,350.72 L355.80,350.92 L358.90,351.12 L362.00,351.33 L365.09,351.53 L368.19,351.74 L371.29,351.95 L374.38,352.15 L377.48,352.36 L380.57,352.57 L383.67,352.78 L386.76,352.99 L389.86,353.20 L392.95,353.41M207.00,348.75 L210.09,348.75 L213.19,348.76 L216.28,348.78 L219.38,348.80 L222.47,348.84 L225.57,348.87 L228.66,348.91 L231.76,348.96 L234.85,349.02 L237.95,349.08 L241.04,349.15 L244.14,349.22 L247.24,349.30 L250.33,349.38 L253.43,349.47 L256.52,349.57 L259.62,349.67 L262.71,349.77 L265.81,349.88 L268.90,349.99 L272.00,350.11 L275.09,350.24 L278.19,350.36 L281.28,350.50 L284.38,350.63 L287.47,350.77 L290.56,350.92 L293.66,351.07 L296.75,351.22 L299.85,351.38 L302.94,351.53 L306.04,351.70 L309.13,351.86 L312.23,352.03 L315.32,352.20 L318.42,352.38 L321.51,352.56 L324.61,352.74 L327.70,352.92 L330.80,353.11 L333.89,353.29 L336.99,353.48 L340.08,353.68 L343.18,353.87 L346.27,354.07 L349.37,354.26 L352.47,354.46 L355.56,354.66 L358.65,354.87 L361.75,355.07 L364.85,355.27 L367.94,355.48 L371.03,355.69 L374.13,355.89 L377.23,356.10 L380.32,356.31 L383.41,356.52 L386.51,356.73 L389.61,356.94 L392.70,357.15M207.00,352.50 L210.09,352.50 L213.17,352.51 L216.26,352.53 L219.35,352.55 L222.43,352.58 L225.52,352.62 L228.61,352.66 L231.70,352.71 L234.78,352.77 L237.87,352.83 L240.96,352.90 L244.05,352.97 L247.14,353.05 L250.23,353.13 L253.31,353.22 L256.40,353.31 L259.49,353.41 L262.58,353.52 L265.67,353.63 L268.76,353.74 L271.85,353.86 L274.94,353.98 L278.03,354.11 L281.12,354.24 L284.21,354.38 L287.30,354.52 L290.39,354.66 L293.48,354.81 L296.57,354.96 L299.66,355.12 L302.75,355.28 L305.84,355.44 L308.93,355.61 L312.02,355.78 L315.12,355.95 L318.21,356.12 L321.30,356.30 L324.39,356.48 L327.48,356.66 L330.57,356.85 L333.67,357.04 L336.76,357.23 L339.85,357.42 L342.94,357.61 L346.04,357.81 L349.13,358.01 L352.22,358.20 L355.32,358.41 L358.41,358.61 L361.50,358.81 L364.60,359.02 L367.69,359.22 L370.78,359.43 L373.88,359.64 L376.97,359.84 L380.07,360.05 L383.16,360.26 L386.26,360.47 L389.35,360.68 L392.45,360.89M207.00,356.25 L210.08,356.25 L213.16,356.26 L216.24,356.28 L219.31,356.30 L222.39,356.33 L225.47,356.37 L228.55,356.41 L231.63,356.46 L234.71,356.52 L237.79,356.58 L240.88,356.65 L243.96,356.72 L247.04,356.80 L250.12,356.88 L253.20,356.97 L256.28,357.06 L259.37,357.16 L262.45,357.27 L265.53,357.38 L268.62,357.49 L271.70,357.61 L274.79,357.73 L277.87,357.86 L280.95,357.99 L284.04,358.13 L287.12,358.27 L290.21,358.41 L293.30,358.56 L296.38,358.71 L299.47,358.87 L302.56,359.02 L305.64,359.19 L308.73,359.35 L311.82,359.52 L314.91,359.69 L317.99,359.87 L321.08,360.04 L324.17,360.22 L327.26,360.41 L330.35,360.59 L333.44,360.78 L336.53,360.97 L339.62,361.16 L342.71,361.35 L345.80,361.55 L348.89,361.75 L351.98,361.95 L355.07,362.15 L358.16,362.35 L361.26,362.55 L364.35,362.76 L367.44,362.96 L370.53,363.17 L373.63,363.38 L376.72,363.59 L379.81,363.79 L382.91,364.00 L386.00,364.21 L389.10,364.42 L392.19,364.63M207.00,360.00 L210.07,360.00 L213.14,360.01 L216.21,360.03 L219.28,360.05 L222.35,360.08 L225.42,360.12 L228.50,360.16 L231.57,360.21 L234.64,360.27 L237.72,360.33 L240.79,360.39 L243.87,360.47 L246.94,360.54 L250.02,360.63 L253.09,360.72 L256.17,360.81 L259.24,360.91 L262.32,361.01 L265.40,361.12 L268.48,361.24 L271.55,361.35 L274.63,361.48 L277.71,361.60 L280.79,361.74 L283.87,361.87 L286.95,362.01 L290.03,362.16 L293.11,362.30 L296.20,362.46 L299.28,362.61 L302.36,362.77 L305.44,362.93 L308.53,363.10 L311.61,363.26 L314.70,363.44 L317.78,363.61 L320.86,363.79 L323.95,363.97 L327.04,364.15 L330.12,364.34 L333.21,364.52 L336.30,364.71 L339.38,364.90 L342.47,365.10 L345.56,365.29 L348.65,365.49 L351.74,365.69 L354.83,365.89 L357.92,366.09 L361.01,366.30 L364.10,366.50 L367.19,366.71 L370.28,366.91 L373.38,367.12 L376.47,367.33 L379.56,367.54 L382.66,367.74 L385.75,367.95 L388.84,368.16 L391.94,368.37M207.00,363.75 L210.06,363.75 L213.12,363.76 L216.19,363.78 L219.25,363.80 L222.31,363.83 L225.38,363.87 L228.44,363.91 L231.51,363.96 L234.57,364.02 L237.64,364.08 L240.71,364.14 L243.77,364.22 L246.84,364.29 L249.91,364.38 L252.98,364.47 L256.05,364.56 L259.12,364.66 L262.19,364.76 L265.26,364.87 L268.33,364.98 L271.41,365.10 L274.48,365.22 L277.55,365.35 L280.63,365.48 L283.70,365.62 L286.78,365.76 L289.86,365.90 L292.93,366.05 L296.01,366.20 L299.09,366.36 L302.17,366.51 L305.24,366.68 L308.32,366.84 L311.40,367.01 L314.49,367.18 L317.57,367.35 L320.65,367.53 L323.73,367.71 L326.81,367.89 L329.90,368.08 L332.98,368.27 L336.07,368.45 L339.15,368.65 L342.24,368.84 L345.32,369.04 L348.41,369.23 L351.50,369.43 L354.59,369.63 L357.67,369.83 L360.76,370.04 L363.85,370.24 L366.94,370.45 L370.03,370.65 L373.12,370.86 L376.22,371.07 L379.31,371.28 L382.40,371.49 L385.50,371.70 L388.59,371.91 L391.68,372.12" fill="none" stroke="#200808" stroke-width="0.60" stroke-opacity="0.80"/><path d="M207.00,330.00 L210.14,330.00 L213.27,330.01 L216.41,330.03 L219.54,330.06 L222.68,330.09 L225.81,330.12 L228.94,330.17 L232.08,330.22 L235.21,330.27 L238.34,330.33 L241.47,330.40 L244.60,330.48 L247.73,330.56 L250.85,330.64 L253.98,330.73 L257.11,330.83 L260.23,330.93 L263.36,331.03 L266.48,331.14 L269.61,331.26 L272.73,331.38 L275.85,331.50 L278.97,331.63 L282.09,331.76 L285.21,331.90 L288.33,332.04 L291.45,332.19 L294.57,332.34 L297.69,332.49 L300.80,332.65 L303.92,332.81 L307.03,332.97 L310.15,333.14 L313.26,333.31 L316.37,333.48 L319.49,333.66 L322.60,333.84 L325.71,334.02 L328.82,334.20 L331.93,334.39 L335.04,334.58 L338.15,334.77 L341.25,334.96 L344.36,335.16 L347.47,335.35 L350.57,335.55 L353.67,335.75 L356.78,335.95 L359.88,336.16 L362.98,336.36 L366.09,336.57 L369.19,336.77 L372.29,336.98 L375.39,337.19 L378.49,337.39 L381.58,337.60 L384.68,337.81 L387.78,338.02 L390.87,338.23 L393.97,338.44 L391.43,375.86 L388.34,375.65 L385.24,375.44 L382.15,375.23 L379.06,375.02 L375.96,374.81 L372.87,374.60 L369.78,374.39 L366.69,374.19 L363.60,373.98 L360.52,373.78 L357.43,373.58 L354.34,373.37 L351.26,373.17 L348.17,372.97 L345.08,372.78 L342.00,372.58 L338.92,372.39 L335.83,372.20 L332.75,372.01 L329.67,371.82 L326.59,371.64 L323.51,371.45 L320.43,371.28 L317.35,371.10 L314.28,370.92 L311.20,370.75 L308.12,370.59 L305.05,370.42 L301.97,370.26 L298.90,370.10 L295.82,369.95 L292.75,369.80 L289.68,369.65 L286.61,369.50 L283.54,369.36 L280.47,369.23 L277.40,369.10 L274.33,368.97 L271.26,368.85 L268.19,368.73 L265.13,368.62 L262.06,368.51 L259.00,368.41 L255.93,368.31 L252.87,368.21 L249.81,368.13 L246.74,368.04 L243.68,367.96 L240.62,367.89 L237.56,367.83 L234.50,367.77 L231.44,367.71 L228.39,367.66 L225.33,367.62 L222.27,367.58 L219.22,367.55 L216.16,367.53 L213.11,367.51 L210.05,367.50 L207.00,367.50Z" fill="none" stroke="#1a0a0a" stroke-width="0.8" stroke-opacity="0.8"/></svg></div></div><div class="vp" style="left:400px;top:263px;width:199px;height:159px"><div class="tb"><div class="ic"></div><div class="tt" style="left:11.5px">Viewport: 5</div><div class="tt" style="left:54px">ODB: C:/Temp/elSize0.odb</div><svg class="a" style="left:0;top:-1px" width="199" height="14" viewBox="0 0 199 14"><rect x="173.0" y="4.6" width="7.2" height="6.8" rx="1.6" fill="#a7b8ca" stroke="#8797a8" stroke-width="0.5"/><rect x="174.3" y="6.3" width="4.6" height="2.2" fill="#f6f8fa" stroke="#6a7480" stroke-width="0.4"/><rect x="181.6" y="4.6" width="6.4" height="6.8" rx="1.6" fill="#b0bfce" stroke="#8d9cac" stroke-width="0.5"/><rect x="183.1" y="6.2" width="3.4" height="3.4" rx="0.8" fill="#eceff3" stroke="#7a8490" stroke-width="0.4"/><circle cx="184.8" cy="7.9" r="0.7" fill="#555"/><rect x="189.8" y="4.6" width="7.6" height="6.8" rx="1.6" fill="#a46464" stroke="#845050" stroke-width="0.5"/><path d="M191.9,6.2 L195.3,9.8 M195.3,6.2 L191.9,9.8" stroke="#f4e4e4" stroke-width="1.1"/></svg></div><div class="bg" style="left:2px;top:14px;width:194px;height:143px"><svg width="194" height="143" viewBox="402 277 194 143"><defs><linearGradient id="g5" gradientUnits="userSpaceOnUse" x1="406.7" y1="0" x2="592.0" y2="0"><stop offset="0.0000" stop-color="#e00000"/><stop offset="0.2860" stop-color="#e00000"/><stop offset="0.2860" stop-color="#e05100"/><stop offset="0.4182" stop-color="#e05100"/><stop offset="0.4182" stop-color="#e0a200"/><stop offset="0.5240" stop-color="#e0a200"/><stop offset="0.5240" stop-color="#cce000"/><stop offset="0.6131" stop-color="#cce000"/><stop offset="0.6131" stop-color="#7ae000"/><stop offset="0.6972" stop-color="#7ae000"/><stop offset="0.6972" stop-color="#28e000"/><stop offset="0.7787" stop-color="#28e000"/><stop offset="0.7787" stop-color="#00e028"/><stop offset="0.8597" stop-color="#00e028"/><stop offset="0.8597" stop-color="#00e07a"/><stop offset="0.9352" stop-color="#00e07a"/><stop offset="0.9352" stop-color="#00e0cc"/><stop offset="1.0000" stop-color="#00e0cc"/></linearGradient></defs><path d="M406.70,326.30 L409.83,326.30 L412.96,326.31 L416.09,326.33 L419.21,326.36 L422.34,326.39 L425.47,326.42 L428.59,326.47 L431.72,326.52 L434.84,326.57 L437.96,326.63 L441.08,326.70 L444.21,326.77 L447.33,326.85 L450.45,326.94 L453.57,327.03 L456.69,327.12 L459.80,327.22 L462.92,327.33 L466.04,327.44 L469.16,327.55 L472.27,327.67 L475.39,327.79 L478.50,327.92 L481.61,328.05 L484.73,328.19 L487.84,328.33 L490.95,328.48 L494.06,328.62 L497.17,328.78 L500.28,328.93 L503.39,329.09 L506.50,329.25 L509.60,329.42 L512.71,329.59 L515.82,329.76 L518.92,329.94 L522.02,330.11 L525.13,330.29 L528.23,330.48 L531.33,330.66 L534.44,330.85 L537.54,331.04 L540.64,331.23 L543.74,331.43 L546.84,331.62 L549.93,331.82 L553.03,332.02 L556.13,332.22 L559.22,332.42 L562.32,332.62 L565.41,332.83 L568.51,333.03 L571.60,333.24 L574.70,333.44 L577.79,333.65 L580.88,333.86 L583.97,334.07 L587.06,334.27 L590.15,334.48 L593.24,334.69 L590.76,371.31 L587.67,371.10 L584.59,370.89 L581.50,370.68 L578.41,370.47 L575.33,370.27 L572.24,370.06 L569.16,369.85 L566.08,369.65 L563.00,369.45 L559.91,369.24 L556.83,369.04 L553.75,368.84 L550.67,368.64 L547.59,368.44 L544.51,368.25 L541.44,368.05 L538.36,367.86 L535.28,367.67 L532.21,367.48 L529.13,367.30 L526.06,367.11 L522.98,366.93 L519.91,366.75 L516.84,366.58 L513.77,366.40 L510.70,366.23 L507.63,366.07 L504.56,365.90 L501.49,365.74 L498.42,365.59 L495.35,365.43 L492.29,365.28 L489.22,365.14 L486.16,364.99 L483.09,364.85 L480.03,364.72 L476.96,364.59 L473.90,364.46 L470.84,364.34 L467.78,364.22 L464.72,364.11 L461.66,364.00 L458.60,363.90 L455.54,363.80 L452.48,363.71 L449.43,363.62 L446.37,363.54 L443.31,363.46 L440.26,363.39 L437.20,363.32 L434.15,363.26 L431.10,363.21 L428.05,363.16 L424.99,363.12 L421.94,363.08 L418.89,363.05 L415.84,363.03 L412.80,363.01 L409.75,363.00 L406.70,363.00Z" fill="url(#g5)"/><path d="M408.58,326.30L408.53,363.00M410.46,326.31L410.36,363.00M412.33,326.31L412.19,363.01M414.21,326.32L414.01,363.02M416.09,326.33L415.84,363.03M417.96,326.34L417.67,363.04M419.84,326.36L419.50,363.06M421.71,326.38L421.33,363.08M423.59,326.40L423.16,363.10M425.47,326.42L424.99,363.12M427.34,326.45L426.83,363.14M429.22,326.48L428.66,363.17M431.09,326.50L430.49,363.20M432.96,326.54L432.32,363.23M434.84,326.57L434.15,363.26M436.71,326.61L435.98,363.30M438.59,326.65L437.82,363.34M440.46,326.69L439.65,363.38M442.33,326.73L441.48,363.42M444.21,326.77L443.31,363.46M446.08,326.82L445.15,363.51M447.95,326.87L446.98,363.56M449.82,326.92L448.81,363.60M451.70,326.97L450.65,363.66M453.57,327.03L452.48,363.71M455.44,327.08L454.32,363.76M457.31,327.14L456.15,363.82M459.18,327.20L457.99,363.88M461.05,327.26L459.82,363.94M462.92,327.33L461.66,364.00M464.79,327.39L463.49,364.07M466.66,327.46L465.33,364.13M468.53,327.53L467.17,364.20M470.40,327.60L469.00,364.27M472.27,327.67L470.84,364.34M474.14,327.74L472.68,364.41M476.01,327.82L474.51,364.49M477.88,327.90L476.35,364.56M479.75,327.97L478.19,364.64M481.61,328.05L480.03,364.72M483.48,328.14L481.87,364.80M485.35,328.22L483.70,364.88M487.22,328.30L485.54,364.96M489.08,328.39L487.38,365.05M490.95,328.48L489.22,365.14M492.82,328.56L491.06,365.22M494.68,328.65L492.90,365.31M496.55,328.75L494.74,365.40M498.41,328.84L496.58,365.49M500.28,328.93L498.42,365.59M502.14,329.03L500.26,365.68M504.01,329.12L502.10,365.77M505.87,329.22L503.94,365.87M507.74,329.32L505.79,365.97M509.60,329.42L507.63,366.07M511.47,329.52L509.47,366.17M513.33,329.62L511.31,366.27M515.19,329.73L513.15,366.37M517.06,329.83L515.00,366.47M518.92,329.94L516.84,366.58M520.78,330.04L518.68,366.68M522.65,330.15L520.53,366.79M524.51,330.26L522.37,366.90M526.37,330.37L524.21,367.00M528.23,330.48L526.06,367.11M530.09,330.59L527.90,367.22M531.95,330.70L529.75,367.33M533.82,330.81L531.59,367.45M535.68,330.93L533.44,367.56M537.54,331.04L535.28,367.67M539.40,331.15L537.13,367.78M541.26,331.27L538.98,367.90M543.12,331.39L540.82,368.01M544.98,331.50L542.67,368.13M546.84,331.62L544.51,368.25M548.69,331.74L546.36,368.36M550.55,331.86L548.21,368.48M552.41,331.98L550.06,368.60M554.27,332.10L551.90,368.72M556.13,332.22L553.75,368.84M557.99,332.34L555.60,368.96M559.84,332.46L557.45,369.08M561.70,332.58L559.30,369.20M563.56,332.70L561.15,369.32M565.41,332.83L563.00,369.45M567.27,332.95L564.84,369.57M569.13,333.07L566.69,369.69M570.98,333.19L568.54,369.81M572.84,333.32L570.39,369.94M574.70,333.44L572.24,370.06M576.55,333.57L574.10,370.18M578.41,333.69L575.95,370.31M580.26,333.82L577.80,370.43M582.12,333.94L579.65,370.56M583.97,334.07L581.50,370.68M585.82,334.19L583.35,370.81M587.68,334.32L585.20,370.93M589.53,334.44L587.06,371.06M591.38,334.57L588.91,371.18M406.70,328.13 L409.83,328.14 L412.95,328.15 L416.07,328.17 L419.20,328.19 L422.32,328.22 L425.44,328.26 L428.56,328.30 L431.68,328.35 L434.80,328.41 L437.92,328.47 L441.04,328.53 L444.16,328.61 L447.28,328.69 L450.40,328.77 L453.51,328.86 L456.63,328.95 L459.74,329.05 L462.86,329.16 L465.97,329.27 L469.09,329.38 L472.20,329.50 L475.31,329.63 L478.42,329.75 L481.53,329.89 L484.64,330.02 L487.75,330.16 L490.86,330.31 L493.97,330.46 L497.08,330.61 L500.19,330.77 L503.29,330.92 L506.40,331.09 L509.50,331.25 L512.61,331.42 L515.71,331.59 L518.82,331.77 L521.92,331.95 L525.02,332.13 L528.12,332.31 L531.22,332.49 L534.32,332.68 L537.42,332.87 L540.52,333.06 L543.62,333.26 L546.72,333.45 L549.82,333.65 L552.91,333.85 L556.01,334.05 L559.10,334.25 L562.20,334.45 L565.29,334.66 L568.39,334.86 L571.48,335.07 L574.57,335.27 L577.66,335.48 L580.76,335.69 L583.85,335.90 L586.94,336.11 L590.03,336.31 L593.11,336.52M406.70,329.97 L409.82,329.97 L412.94,329.98 L416.06,330.00 L419.18,330.02 L422.30,330.06 L425.42,330.09 L428.54,330.14 L431.65,330.18 L434.77,330.24 L437.89,330.30 L441.00,330.37 L444.12,330.44 L447.23,330.52 L450.35,330.60 L453.46,330.69 L456.57,330.79 L459.68,330.89 L462.80,330.99 L465.91,331.10 L469.02,331.22 L472.13,331.34 L475.24,331.46 L478.35,331.59 L481.45,331.72 L484.56,331.86 L487.67,332.00 L490.78,332.14 L493.88,332.29 L496.99,332.44 L500.09,332.60 L503.20,332.76 L506.30,332.92 L509.41,333.09 L512.51,333.25 L515.61,333.43 L518.71,333.60 L521.81,333.78 L524.91,333.96 L528.01,334.14 L531.11,334.33 L534.21,334.51 L537.31,334.70 L540.41,334.89 L543.51,335.09 L546.60,335.28 L549.70,335.48 L552.80,335.68 L555.89,335.88 L558.99,336.08 L562.08,336.28 L565.17,336.49 L568.27,336.69 L571.36,336.90 L574.45,337.10 L577.54,337.31 L580.63,337.52 L583.72,337.73 L586.81,337.94 L589.90,338.14 L592.99,338.35M406.70,331.80 L409.82,331.81 L412.93,331.82 L416.05,331.84 L419.17,331.86 L422.28,331.89 L425.39,331.93 L428.51,331.97 L431.62,332.02 L434.74,332.07 L437.85,332.14 L440.96,332.20 L444.07,332.28 L447.18,332.35 L450.29,332.44 L453.40,332.53 L456.51,332.62 L459.62,332.72 L462.73,332.83 L465.84,332.94 L468.95,333.05 L472.06,333.17 L475.16,333.29 L478.27,333.42 L481.38,333.55 L484.48,333.69 L487.59,333.83 L490.69,333.98 L493.79,334.12 L496.90,334.28 L500.00,334.43 L503.10,334.59 L506.20,334.75 L509.31,334.92 L512.41,335.09 L515.51,335.26 L518.61,335.43 L521.71,335.61 L524.81,335.79 L527.91,335.97 L531.00,336.16 L534.10,336.35 L537.20,336.53 L540.30,336.73 L543.39,336.92 L546.49,337.11 L549.58,337.31 L552.68,337.51 L555.77,337.71 L558.87,337.91 L561.96,338.11 L565.05,338.32 L568.14,338.52 L571.24,338.73 L574.33,338.94 L577.42,339.14 L580.51,339.35 L583.60,339.56 L586.69,339.77 L589.78,339.98 L592.87,340.18M406.70,333.64 L409.81,333.64 L412.93,333.65 L416.04,333.67 L419.15,333.69 L422.26,333.73 L425.37,333.76 L428.48,333.81 L431.59,333.85 L434.70,333.91 L437.81,333.97 L440.92,334.04 L444.03,334.11 L447.14,334.19 L450.24,334.27 L453.35,334.36 L456.46,334.46 L459.56,334.56 L462.67,334.66 L465.77,334.77 L468.88,334.88 L471.98,335.00 L475.09,335.13 L478.19,335.25 L481.30,335.39 L484.40,335.52 L487.50,335.66 L490.60,335.81 L493.71,335.96 L496.81,336.11 L499.91,336.26 L503.01,336.42 L506.11,336.58 L509.21,336.75 L512.31,336.92 L515.41,337.09 L518.50,337.26 L521.60,337.44 L524.70,337.62 L527.80,337.80 L530.89,337.99 L533.99,338.18 L537.09,338.37 L540.18,338.56 L543.28,338.75 L546.37,338.95 L549.47,339.14 L552.56,339.34 L555.65,339.54 L558.75,339.74 L561.84,339.95 L564.93,340.15 L568.02,340.35 L571.11,340.56 L574.21,340.77 L577.30,340.97 L580.39,341.18 L583.48,341.39 L586.57,341.60 L589.65,341.81 L592.74,342.02M406.70,335.47 L409.81,335.48 L412.92,335.49 L416.03,335.51 L419.13,335.53 L422.24,335.56 L425.35,335.60 L428.45,335.64 L431.56,335.69 L434.67,335.74 L437.77,335.81 L440.88,335.87 L443.98,335.95 L447.09,336.02 L450.19,336.11 L453.30,336.20 L456.40,336.29 L459.50,336.39 L462.61,336.49 L465.71,336.60 L468.81,336.72 L471.91,336.84 L475.01,336.96 L478.12,337.09 L481.22,337.22 L484.32,337.36 L487.42,337.50 L490.52,337.64 L493.62,337.79 L496.72,337.94 L499.81,338.10 L502.91,338.25 L506.01,338.42 L509.11,338.58 L512.21,338.75 L515.30,338.92 L518.40,339.10 L521.50,339.27 L524.59,339.45 L527.69,339.64 L530.78,339.82 L533.88,340.01 L536.97,340.20 L540.07,340.39 L543.16,340.58 L546.26,340.78 L549.35,340.97 L552.44,341.17 L555.53,341.37 L558.63,341.57 L561.72,341.78 L564.81,341.98 L567.90,342.19 L570.99,342.39 L574.08,342.60 L577.17,342.80 L580.26,343.01 L583.35,343.22 L586.44,343.43 L589.53,343.64 L592.62,343.85M406.70,337.31 L409.80,337.31 L412.91,337.32 L416.01,337.34 L419.12,337.36 L422.22,337.39 L425.32,337.43 L428.43,337.47 L431.53,337.52 L434.63,337.58 L437.73,337.64 L440.84,337.71 L443.94,337.78 L447.04,337.86 L450.14,337.94 L453.24,338.03 L456.34,338.13 L459.44,338.22 L462.54,338.33 L465.64,338.44 L468.74,338.55 L471.84,338.67 L474.94,338.79 L478.04,338.92 L481.14,339.05 L484.24,339.19 L487.33,339.33 L490.43,339.47 L493.53,339.62 L496.62,339.77 L499.72,339.93 L502.82,340.09 L505.91,340.25 L509.01,340.41 L512.11,340.58 L515.20,340.75 L518.30,340.93 L521.39,341.11 L524.49,341.29 L527.58,341.47 L530.67,341.65 L533.77,341.84 L536.86,342.03 L539.95,342.22 L543.05,342.41 L546.14,342.61 L549.23,342.81 L552.32,343.00 L555.42,343.20 L558.51,343.41 L561.60,343.61 L564.69,343.81 L567.78,344.02 L570.87,344.22 L573.96,344.43 L577.05,344.64 L580.14,344.84 L583.23,345.05 L586.32,345.26 L589.41,345.47 L592.50,345.68M406.70,339.14 L409.80,339.15 L412.90,339.16 L416.00,339.18 L419.10,339.20 L422.20,339.23 L425.30,339.27 L428.40,339.31 L431.50,339.36 L434.60,339.41 L437.70,339.47 L440.80,339.54 L443.89,339.61 L446.99,339.69 L450.09,339.78 L453.19,339.86 L456.29,339.96 L459.38,340.06 L462.48,340.16 L465.58,340.27 L468.67,340.39 L471.77,340.50 L474.87,340.63 L477.96,340.76 L481.06,340.89 L484.15,341.02 L487.25,341.16 L490.34,341.31 L493.44,341.45 L496.53,341.61 L499.63,341.76 L502.72,341.92 L505.82,342.08 L508.91,342.25 L512.01,342.42 L515.10,342.59 L518.19,342.76 L521.29,342.94 L524.38,343.12 L527.47,343.30 L530.56,343.48 L533.66,343.67 L536.75,343.86 L539.84,344.05 L542.93,344.24 L546.02,344.44 L549.11,344.64 L552.21,344.84 L555.30,345.03 L558.39,345.24 L561.48,345.44 L564.57,345.64 L567.66,345.85 L570.75,346.05 L573.84,346.26 L576.93,346.47 L580.02,346.67 L583.11,346.88 L586.19,347.09 L589.28,347.30 L592.37,347.51M406.70,340.98 L409.80,340.98 L412.89,340.99 L415.99,341.01 L419.09,341.03 L422.18,341.06 L425.28,341.10 L428.37,341.14 L431.47,341.19 L434.56,341.25 L437.66,341.31 L440.75,341.38 L443.85,341.45 L446.94,341.53 L450.04,341.61 L453.13,341.70 L456.23,341.79 L459.32,341.89 L462.42,342.00 L465.51,342.11 L468.60,342.22 L471.70,342.34 L474.79,342.46 L477.89,342.59 L480.98,342.72 L484.07,342.86 L487.16,343.00 L490.26,343.14 L493.35,343.29 L496.44,343.44 L499.54,343.59 L502.63,343.75 L505.72,343.91 L508.81,344.08 L511.90,344.25 L515.00,344.42 L518.09,344.59 L521.18,344.77 L524.27,344.95 L527.36,345.13 L530.45,345.32 L533.54,345.50 L536.64,345.69 L539.73,345.88 L542.82,346.08 L545.91,346.27 L549.00,346.47 L552.09,346.67 L555.18,346.87 L558.27,347.07 L561.36,347.27 L564.45,347.47 L567.54,347.68 L570.63,347.88 L573.72,348.09 L576.80,348.30 L579.89,348.50 L582.98,348.71 L586.07,348.92 L589.16,349.13 L592.25,349.34M406.70,342.81 L409.79,342.82 L412.88,342.83 L415.98,342.85 L419.07,342.87 L422.16,342.90 L425.25,342.94 L428.35,342.98 L431.44,343.03 L434.53,343.08 L437.62,343.14 L440.71,343.21 L443.80,343.28 L446.90,343.36 L449.99,343.44 L453.08,343.53 L456.17,343.63 L459.26,343.73 L462.35,343.83 L465.44,343.94 L468.54,344.05 L471.63,344.17 L474.72,344.29 L477.81,344.42 L480.90,344.55 L483.99,344.69 L487.08,344.83 L490.17,344.97 L493.26,345.12 L496.35,345.27 L499.44,345.43 L502.53,345.59 L505.62,345.75 L508.71,345.91 L511.80,346.08 L514.89,346.25 L517.98,346.43 L521.07,346.60 L524.16,346.78 L527.25,346.96 L530.34,347.15 L533.43,347.33 L536.52,347.52 L539.61,347.71 L542.70,347.91 L545.79,348.10 L548.88,348.30 L551.97,348.50 L555.06,348.70 L558.15,348.90 L561.24,349.10 L564.33,349.30 L567.41,349.51 L570.50,349.71 L573.59,349.92 L576.68,350.13 L579.77,350.34 L582.86,350.54 L585.95,350.75 L589.04,350.96 L592.12,351.17M406.70,344.65 L409.79,344.65 L412.88,344.66 L415.96,344.68 L419.05,344.70 L422.14,344.73 L425.23,344.77 L428.32,344.81 L431.41,344.86 L434.50,344.92 L437.58,344.98 L440.67,345.05 L443.76,345.12 L446.85,345.20 L449.94,345.28 L453.02,345.37 L456.11,345.46 L459.20,345.56 L462.29,345.66 L465.38,345.77 L468.47,345.89 L471.56,346.01 L474.64,346.13 L477.73,346.26 L480.82,346.39 L483.91,346.52 L487.00,346.66 L490.08,346.81 L493.17,346.95 L496.26,347.10 L499.35,347.26 L502.44,347.42 L505.53,347.58 L508.62,347.74 L511.70,347.91 L514.79,348.08 L517.88,348.26 L520.97,348.43 L524.06,348.61 L527.14,348.80 L530.23,348.98 L533.32,349.17 L536.41,349.36 L539.50,349.55 L542.59,349.74 L545.67,349.93 L548.76,350.13 L551.85,350.33 L554.94,350.53 L558.03,350.73 L561.12,350.93 L564.20,351.14 L567.29,351.34 L570.38,351.55 L573.47,351.75 L576.56,351.96 L579.65,352.17 L582.74,352.37 L585.82,352.58 L588.91,352.79 L592.00,353.00M406.70,346.48 L409.78,346.49 L412.87,346.50 L415.95,346.52 L419.04,346.54 L422.12,346.57 L425.21,346.61 L428.29,346.65 L431.38,346.70 L434.46,346.75 L437.55,346.81 L440.63,346.88 L443.72,346.95 L446.80,347.03 L449.89,347.11 L452.97,347.20 L456.06,347.30 L459.14,347.39 L462.23,347.50 L465.31,347.61 L468.40,347.72 L471.48,347.84 L474.57,347.96 L477.65,348.09 L480.74,348.22 L483.83,348.36 L486.91,348.50 L490.00,348.64 L493.08,348.79 L496.17,348.94 L499.26,349.09 L502.34,349.25 L505.43,349.41 L508.52,349.58 L511.60,349.74 L514.69,349.92 L517.78,350.09 L520.86,350.27 L523.95,350.45 L527.04,350.63 L530.12,350.81 L533.21,351.00 L536.30,351.19 L539.38,351.38 L542.47,351.57 L545.56,351.77 L548.65,351.96 L551.73,352.16 L554.82,352.36 L557.91,352.56 L561.00,352.76 L564.08,352.97 L567.17,353.17 L570.26,353.38 L573.35,353.58 L576.44,353.79 L579.52,354.00 L582.61,354.21 L585.70,354.41 L588.79,354.62 L591.88,354.83M406.70,348.32 L409.78,348.32 L412.86,348.33 L415.94,348.35 L419.02,348.37 L422.10,348.40 L425.18,348.44 L428.26,348.48 L431.34,348.53 L434.43,348.59 L437.51,348.65 L440.59,348.71 L443.67,348.79 L446.75,348.86 L449.83,348.95 L452.92,349.04 L456.00,349.13 L459.08,349.23 L462.16,349.33 L465.25,349.44 L468.33,349.55 L471.41,349.67 L474.49,349.80 L477.58,349.92 L480.66,350.05 L483.74,350.19 L486.83,350.33 L489.91,350.47 L493.00,350.62 L496.08,350.77 L499.16,350.92 L502.25,351.08 L505.33,351.24 L508.42,351.41 L511.50,351.58 L514.59,351.75 L517.67,351.92 L520.76,352.10 L523.84,352.28 L526.93,352.46 L530.01,352.64 L533.10,352.83 L536.18,353.02 L539.27,353.21 L542.36,353.40 L545.44,353.60 L548.53,353.79 L551.62,353.99 L554.70,354.19 L557.79,354.39 L560.88,354.59 L563.96,354.80 L567.05,355.00 L570.14,355.21 L573.22,355.41 L576.31,355.62 L579.40,355.83 L582.49,356.04 L585.58,356.24 L588.66,356.45 L591.75,356.66M406.70,350.15 L409.78,350.16 L412.85,350.17 L415.93,350.19 L419.01,350.21 L422.08,350.24 L425.16,350.28 L428.24,350.32 L431.31,350.37 L434.39,350.42 L437.47,350.48 L440.55,350.55 L443.63,350.62 L446.70,350.70 L449.78,350.78 L452.86,350.87 L455.94,350.96 L459.02,351.06 L462.10,351.17 L465.18,351.27 L468.26,351.39 L471.34,351.51 L474.42,351.63 L477.50,351.76 L480.58,351.89 L483.66,352.02 L486.74,352.16 L489.83,352.30 L492.91,352.45 L495.99,352.60 L499.07,352.76 L502.15,352.92 L505.24,353.08 L508.32,353.24 L511.40,353.41 L514.48,353.58 L517.57,353.75 L520.65,353.93 L523.74,354.11 L526.82,354.29 L529.90,354.47 L532.99,354.66 L536.07,354.85 L539.16,355.04 L542.24,355.23 L545.33,355.43 L548.41,355.62 L551.50,355.82 L554.58,356.02 L557.67,356.22 L560.76,356.42 L563.84,356.63 L566.93,356.83 L570.02,357.04 L573.10,357.24 L576.19,357.45 L579.28,357.66 L582.36,357.87 L585.45,358.08 L588.54,358.28 L591.63,358.49M406.70,351.99 L409.77,351.99 L412.84,352.00 L415.92,352.02 L418.99,352.04 L422.06,352.07 L425.14,352.11 L428.21,352.15 L431.28,352.20 L434.36,352.26 L437.43,352.32 L440.51,352.38 L443.58,352.46 L446.66,352.53 L449.73,352.62 L452.81,352.70 L455.88,352.80 L458.96,352.90 L462.04,353.00 L465.11,353.11 L468.19,353.22 L471.27,353.34 L474.35,353.46 L477.42,353.59 L480.50,353.72 L483.58,353.86 L486.66,353.99 L489.74,354.14 L492.82,354.28 L495.90,354.44 L498.98,354.59 L502.06,354.75 L505.14,354.91 L508.22,355.07 L511.30,355.24 L514.38,355.41 L517.46,355.59 L520.55,355.76 L523.63,355.94 L526.71,356.12 L529.79,356.31 L532.88,356.49 L535.96,356.68 L539.04,356.87 L542.13,357.06 L545.21,357.26 L548.30,357.46 L551.38,357.65 L554.46,357.85 L557.55,358.05 L560.64,358.26 L563.72,358.46 L566.81,358.66 L569.89,358.87 L572.98,359.08 L576.07,359.28 L579.15,359.49 L582.24,359.70 L585.33,359.91 L588.42,360.11 L591.50,360.32M406.70,353.82 L409.77,353.83 L412.84,353.84 L415.90,353.86 L418.97,353.88 L422.04,353.91 L425.11,353.95 L428.18,353.99 L431.25,354.04 L434.32,354.09 L437.39,354.15 L440.47,354.22 L443.54,354.29 L446.61,354.37 L449.68,354.45 L452.75,354.54 L455.83,354.63 L458.90,354.73 L461.97,354.83 L465.05,354.94 L468.12,355.06 L471.20,355.17 L474.27,355.30 L477.35,355.42 L480.42,355.55 L483.50,355.69 L486.58,355.83 L489.65,355.97 L492.73,356.12 L495.81,356.27 L498.89,356.42 L501.96,356.58 L505.04,356.74 L508.12,356.91 L511.20,357.07 L514.28,357.24 L517.36,357.42 L520.44,357.59 L523.52,357.77 L526.60,357.95 L529.68,358.14 L532.76,358.32 L535.85,358.51 L538.93,358.70 L542.01,358.90 L545.09,359.09 L548.18,359.29 L551.26,359.48 L554.35,359.68 L557.43,359.88 L560.52,360.09 L563.60,360.29 L566.69,360.49 L569.77,360.70 L572.86,360.91 L575.94,361.11 L579.03,361.32 L582.12,361.53 L585.21,361.74 L588.29,361.95 L591.38,362.15M406.70,355.66 L409.76,355.66 L412.83,355.67 L415.89,355.69 L418.96,355.71 L422.02,355.74 L425.09,355.78 L428.15,355.82 L431.22,355.87 L434.29,355.93 L437.36,355.99 L440.42,356.05 L443.49,356.12 L446.56,356.20 L449.63,356.28 L452.70,356.37 L455.77,356.47 L458.84,356.56 L461.91,356.67 L464.98,356.78 L468.05,356.89 L471.13,357.01 L474.20,357.13 L477.27,357.26 L480.34,357.39 L483.42,357.52 L486.49,357.66 L489.57,357.80 L492.64,357.95 L495.72,358.10 L498.79,358.26 L501.87,358.41 L504.95,358.57 L508.02,358.74 L511.10,358.91 L514.18,359.08 L517.26,359.25 L520.33,359.43 L523.41,359.60 L526.49,359.79 L529.57,359.97 L532.65,360.16 L535.73,360.34 L538.82,360.53 L541.90,360.73 L544.98,360.92 L548.06,361.12 L551.14,361.32 L554.23,361.52 L557.31,361.72 L560.39,361.92 L563.48,362.12 L566.56,362.33 L569.65,362.53 L572.73,362.74 L575.82,362.94 L578.91,363.15 L581.99,363.36 L585.08,363.57 L588.17,363.78 L591.26,363.98M406.70,357.50 L409.76,357.50 L412.82,357.51 L415.88,357.53 L418.94,357.55 L422.00,357.58 L425.07,357.62 L428.13,357.66 L431.19,357.71 L434.25,357.76 L437.32,357.82 L440.38,357.89 L443.45,357.96 L446.51,358.04 L449.58,358.12 L452.65,358.21 L455.71,358.30 L458.78,358.40 L461.85,358.50 L464.92,358.61 L467.98,358.72 L471.05,358.84 L474.12,358.96 L477.19,359.09 L480.26,359.22 L483.34,359.35 L486.41,359.49 L489.48,359.64 L492.55,359.78 L495.63,359.93 L498.70,360.09 L501.77,360.25 L504.85,360.41 L507.92,360.57 L511.00,360.74 L514.08,360.91 L517.15,361.08 L520.23,361.26 L523.31,361.44 L526.38,361.62 L529.46,361.80 L532.54,361.99 L535.62,362.18 L538.70,362.37 L541.78,362.56 L544.86,362.75 L547.94,362.95 L551.03,363.15 L554.11,363.35 L557.19,363.55 L560.27,363.75 L563.36,363.95 L566.44,364.16 L569.53,364.36 L572.61,364.57 L575.70,364.77 L578.78,364.98 L581.87,365.19 L584.96,365.40 L588.05,365.61 L591.13,365.82M406.70,359.33 L409.76,359.33 L412.81,359.34 L415.87,359.36 L418.93,359.38 L421.98,359.41 L425.04,359.45 L428.10,359.49 L431.16,359.54 L434.22,359.60 L437.28,359.66 L440.34,359.72 L443.40,359.79 L446.47,359.87 L449.53,359.95 L452.59,360.04 L455.65,360.13 L458.72,360.23 L461.78,360.34 L464.85,360.44 L467.92,360.56 L470.98,360.67 L474.05,360.80 L477.12,360.92 L480.19,361.05 L483.25,361.19 L486.32,361.33 L489.39,361.47 L492.46,361.62 L495.54,361.77 L498.61,361.92 L501.68,362.08 L504.75,362.24 L507.82,362.40 L510.90,362.57 L513.97,362.74 L517.05,362.91 L520.12,363.09 L523.20,363.27 L526.28,363.45 L529.35,363.63 L532.43,363.82 L535.51,364.01 L538.59,364.20 L541.67,364.39 L544.75,364.58 L547.83,364.78 L550.91,364.98 L553.99,365.18 L557.07,365.38 L560.15,365.58 L563.24,365.78 L566.32,365.99 L569.41,366.19 L572.49,366.40 L575.58,366.61 L578.66,366.81 L581.75,367.02 L584.83,367.23 L587.92,367.44 L591.01,367.65M406.70,361.16 L409.75,361.17 L412.80,361.18 L415.86,361.20 L418.91,361.22 L421.96,361.25 L425.02,361.28 L428.07,361.33 L431.13,361.38 L434.19,361.43 L437.24,361.49 L440.30,361.56 L443.36,361.63 L446.42,361.70 L449.48,361.79 L452.54,361.88 L455.60,361.97 L458.66,362.07 L461.72,362.17 L464.78,362.28 L467.85,362.39 L470.91,362.51 L473.98,362.63 L477.04,362.76 L480.11,362.89 L483.17,363.02 L486.24,363.16 L489.31,363.30 L492.38,363.45 L495.44,363.60 L498.51,363.75 L501.58,363.91 L504.65,364.07 L507.73,364.24 L510.80,364.40 L513.87,364.57 L516.94,364.75 L520.02,364.92 L523.09,365.10 L526.17,365.28 L529.24,365.46 L532.32,365.65 L535.40,365.84 L538.47,366.03 L541.55,366.22 L544.63,366.42 L547.71,366.61 L550.79,366.81 L553.87,367.01 L556.95,367.21 L560.03,367.41 L563.12,367.61 L566.20,367.82 L569.28,368.02 L572.37,368.23 L575.45,368.44 L578.54,368.64 L581.62,368.85 L584.71,369.06 L587.80,369.27 L590.89,369.48" fill="none" stroke="#180606" stroke-width="0.45" stroke-opacity="0.85"/><path d="M406.70,326.30 L409.83,326.30 L412.96,326.31 L416.09,326.33 L419.21,326.36 L422.34,326.39 L425.47,326.42 L428.59,326.47 L431.72,326.52 L434.84,326.57 L437.96,326.63 L441.08,326.70 L444.21,326.77 L447.33,326.85 L450.45,326.94 L453.57,327.03 L456.69,327.12 L459.80,327.22 L462.92,327.33 L466.04,327.44 L469.16,327.55 L472.27,327.67 L475.39,327.79 L478.50,327.92 L481.61,328.05 L484.73,328.19 L487.84,328.33 L490.95,328.48 L494.06,328.62 L497.17,328.78 L500.28,328.93 L503.39,329.09 L506.50,329.25 L509.60,329.42 L512.71,329.59 L515.82,329.76 L518.92,329.94 L522.02,330.11 L525.13,330.29 L528.23,330.48 L531.33,330.66 L534.44,330.85 L537.54,331.04 L540.64,331.23 L543.74,331.43 L546.84,331.62 L549.93,331.82 L553.03,332.02 L556.13,332.22 L559.22,332.42 L562.32,332.62 L565.41,332.83 L568.51,333.03 L571.60,333.24 L574.70,333.44 L577.79,333.65 L580.88,333.86 L583.97,334.07 L587.06,334.27 L590.15,334.48 L593.24,334.69 L590.76,371.31 L587.67,371.10 L584.59,370.89 L581.50,370.68 L578.41,370.47 L575.33,370.27 L572.24,370.06 L569.16,369.85 L566.08,369.65 L563.00,369.45 L559.91,369.24 L556.83,369.04 L553.75,368.84 L550.67,368.64 L547.59,368.44 L544.51,368.25 L541.44,368.05 L538.36,367.86 L535.28,367.67 L532.21,367.48 L529.13,367.30 L526.06,367.11 L522.98,366.93 L519.91,366.75 L516.84,366.58 L513.77,366.40 L510.70,366.23 L507.63,366.07 L504.56,365.90 L501.49,365.74 L498.42,365.59 L495.35,365.43 L492.29,365.28 L489.22,365.14 L486.16,364.99 L483.09,364.85 L480.03,364.72 L476.96,364.59 L473.90,364.46 L470.84,364.34 L467.78,364.22 L464.72,364.11 L461.66,364.00 L458.60,363.90 L455.54,363.80 L452.48,363.71 L449.43,363.62 L446.37,363.54 L443.31,363.46 L440.26,363.39 L437.20,363.32 L434.15,363.26 L431.10,363.21 L428.05,363.16 L424.99,363.12 L421.94,363.08 L418.89,363.05 L415.84,363.03 L412.80,363.01 L409.75,363.00 L406.70,363.00Z" fill="none" stroke="#1a0a0a" stroke-width="0.8" stroke-opacity="0.8"/></svg></div></div><div class="a" style="left:1px;top:421px;width:598px;height:1px;background:#2e4652"></div><div class="a" style="left:1px;top:422px;width:598px;height:1px;background:#9a9a9a"></div><div class="a" style="left:1px;top:423px;width:315px;height:5px;background:#fff"></div><div class="a" style="left:1px;top:428px;width:315px;height:8px;background:#fbfbfb"></div><div class="a" style="left:1px;top:436px;width:315px;height:1px;background:#e2e2e2"></div><div class="a" style="left:1px;top:437px;width:315px;height:10px;background:#f0f0f0"></div><div class="a" style="left:1px;top:447px;width:315px;height:1px;background:#dadada"></div><div class="a" style="left:1px;top:448px;width:315px;height:10px;background:#f0f0f0"></div><div class="a" style="left:1px;top:458px;width:315px;height:1px;background:#a8a8a8"></div><svg class="a" style="left:0;top:0" width="600" height="687" viewBox="0 0 600 687" font-family="Liberation Sans"><path d="M1.5,429.8 H6 V433.8 H1.5" fill="none" stroke="#333" stroke-width="0.7"/><path d="M1.5,430.6 H6" stroke="#333" stroke-width="0.6"/><text x="9.20" y="434.72" textLength="6.10" lengthAdjust="spacingAndGlyphs" font-size="5.60" fill="#1a1a1a">File</text><text x="20.80" y="434.72" textLength="7.50" lengthAdjust="spacingAndGlyphs" font-size="5.60" fill="#1a1a1a">Edit</text><text x="32.80" y="434.72" textLength="15.90" lengthAdjust="spacingAndGlyphs" font-size="5.60" fill="#1a1a1a">Settings</text><text x="53.30" y="434.72" textLength="16.70" lengthAdjust="spacingAndGlyphs" font-size="5.60" fill="#1a1a1a">Window</text><text x="75.00" y="434.72" textLength="9.20" lengthAdjust="spacingAndGlyphs" font-size="5.60" fill="#1a1a1a">Help</text><line x1="9.2" y1="435.3" x2="11.2" y2="435.3" stroke="#555" stroke-width="0.5"/><line x1="20.8" y1="435.3" x2="23.0" y2="435.3" stroke="#555" stroke-width="0.5"/><line x1="32.8" y1="435.3" x2="35.0" y2="435.3" stroke="#555" stroke-width="0.5"/><line x1="53.3" y1="435.3" x2="57.0" y2="435.3" stroke="#555" stroke-width="0.5"/><line x1="75.0" y1="435.3" x2="77.5" y2="435.3" stroke="#555" stroke-width="0.5"/><rect x="300" y="429.5" width="4.6" height="4.6" fill="#e8e8e8"/><path d="M301,433.3 H303.5" stroke="#777" stroke-width="0.6"/><rect x="305.5" y="429.5" width="4.6" height="4.6" fill="#e8e8e8"/><path d="M306.5,433.3 L309,430.5 M307.5,430.5 H309 V432" stroke="#888" stroke-width="0.5" fill="none"/><rect x="311" y="429.5" width="4.6" height="4.6" fill="#e8e8e8"/><path d="M312,430.5 L314.5,433.3 M314.5,430.5 L312,433.3" stroke="#777" stroke-width="0.5"/><rect x="2.5" y="439.5" width="5.5" height="5.5" rx="1" fill="#e8c850" stroke="#b89a30" stroke-width="0.5"/><path d="M5,438 L8,440.5" stroke="#d02020" stroke-width="1.6"/><text x="10.30" y="443.82" textLength="18.00" lengthAdjust="spacingAndGlyphs" font-size="5.60" fill="#1a1a1a">Main file:</text><rect x="30.5" y="438.2" width="60" height="7.6" fill="#fbfbfb" stroke="#cfcfcf" stroke-width="0.6"/><text x="31.70" y="443.74" textLength="46.60" lengthAdjust="spacingAndGlyphs" font-size="5.40" fill="#1a1a1a">&lt;No main file selected&gt;</text><rect x="87.3" y="438.6" width="2.4" height="6.8" fill="#2a2a2a"/><path d="M88,440.3 L88.5,439.6 L89,440.3 M88,443.7 L88.5,444.4 L89,443.7" stroke="#fff" stroke-width="0.4" fill="none"/><line x1="91.3" y1="438" x2="91.3" y2="446" stroke="#c8c8c8" stroke-width="0.6"/><text x="93.00" y="443.82" textLength="13.30" lengthAdjust="spacingAndGlyphs" font-size="5.60" fill="#1a1a1a">Run in:</text><circle cx="110.5" cy="441.8" r="1.5" fill="#fff" stroke="#777" stroke-width="0.5"/><text x="113.30" y="443.82" textLength="7.50" lengthAdjust="spacingAndGlyphs" font-size="5.60" fill="#1a1a1a">GUI</text><circle cx="125" cy="441.8" r="1.5" fill="#fff" stroke="#777" stroke-width="0.5"/><text x="127.50" y="443.82" textLength="13.30" lengthAdjust="spacingAndGlyphs" font-size="5.60" fill="#1a1a1a">Kernel</text><circle cx="144.8" cy="441.8" r="1.5" fill="#2a5070" stroke="#555" stroke-width="0.5"/><text x="147.50" y="443.82" textLength="10.80" lengthAdjust="spacingAndGlyphs" font-size="5.60" fill="#1a1a1a">Local</text><rect x="161.7" y="438.5" width="4" height="6.5" fill="#8a6a3a"/><rect x="162.3" y="439" width="2.5" height="2.5" fill="#d04020"/><rect x="162.3" y="442" width="2.8" height="2.2" fill="#3a8a3a"/><rect x="170" y="438.5" width="3.4" height="6.5" fill="#e4e4e4" stroke="#bdbdbd" stroke-width="0.5"/><rect x="277.3" y="439.3" width="37.8" height="7" fill="#eeeeee" stroke="#a0a0a0" stroke-width="0.6"/><text x="278.80" y="444.69" textLength="35.20" lengthAdjust="spacingAndGlyphs" font-size="5.80" fill="#1a1a1a">Connected to CAE</text><path d="M2.5,449.5 H5.2 L6.5,450.8 V456 H2.5 Z" fill="#fff" stroke="#8a8a8a" stroke-width="0.6"/><rect x="10.5" y="450.5" width="4" height="5" fill="#c8d4e4"/><path d="M12,455 L16.5,451" stroke="#1a2a80" stroke-width="1.8"/><rect x="21.7" y="449.5" width="3.8" height="5.5" fill="#2a4a9a"/><rect x="22.5" y="450" width="2.2" height="1.8" fill="#e8e8f0"/><rect x="29.2" y="449.5" width="4.5" height="5.5" fill="#e8f0e8" stroke="#6a9a6a" stroke-width="0.4"/><path d="M30,454 L32.8,450.5" stroke="#20a030" stroke-width="1.5"/><line x1="37" y1="448.5" x2="37" y2="457.5" stroke="#cfcfcf" stroke-width="0.7"/><text x="42.70" y="454.72" textLength="17.30" lengthAdjust="spacingAndGlyphs" font-size="5.60" fill="#1a1a1a">Stopped</text><path d="M67.7,451 L69.7,452.6 L67.7,454.2 Z" fill="#555"/><path d="M75.8,451 L78,452.6 L75.8,454.2 Z M78.5,451 V454.2" fill="none" stroke="#777" stroke-width="0.5"/><rect x="84.9" y="451" width="3.3" height="3.3" fill="#555"/><path d="M93.5,451 V454.2 M97.5,451 L94.5,452.6 L97.5,454.2 M96,451 L93.8,452.6 L96,454.2" fill="none" stroke="#666" stroke-width="0.5"/><path d="M106.5,451 V454.2 M102,451 L105,452.6 L102,454.2 M103.5,451 L105.7,452.6 L103.5,454.2" fill="none" stroke="#666" stroke-width="0.5"/><circle cx="113.3" cy="452.6" r="1.5" fill="none" stroke="#999" stroke-width="0.5"/><line x1="119.2" y1="448.5" x2="119.2" y2="457.5" stroke="#cfcfcf" stroke-width="0.7"/><circle cx="125" cy="452.7" r="3" fill="#d02828"/><circle cx="125" cy="452.7" r="1.6" fill="#fff"/><rect x="121.5" y="453.5" width="4" height="2.5" fill="#bbb"/><rect x="131.9" y="450.9" width="2.8" height="3.4" fill="#fff" stroke="#888" stroke-width="0.5"/><text x="135.80" y="454.72" textLength="27.20" lengthAdjust="spacingAndGlyphs" font-size="5.60" fill="#1a1a1a">Ignore Breaks</text><line x1="166" y1="448.5" x2="166" y2="457.5" stroke="#cfcfcf" stroke-width="0.7"/><text x="168.20" y="454.72" textLength="23.30" lengthAdjust="spacingAndGlyphs" font-size="5.60" fill="#1a1a1a">Delay (ms):</text><rect x="192.2" y="449" width="15.8" height="7.8" fill="#fff" stroke="#d0d0d0" stroke-width="0.6"/><text x="193.70" y="454.72" textLength="1.90" lengthAdjust="spacingAndGlyphs" font-size="5.60" fill="#1a1a1a">0</text><line x1="211" y1="448.5" x2="211" y2="457.5" stroke="#cfcfcf" stroke-width="0.7"/><path d="M216.6,450.5 V454.5 M215.6,453.5 L216.6,454.6 L217.6,453.5" fill="none" stroke="#555" stroke-width="0.5"/><line x1="221.5" y1="448.5" x2="221.5" y2="457.5" stroke="#cfcfcf" stroke-width="0.7"/><rect x="226" y="452" width="6" height="4" fill="#a8b8c8"/><path d="M226.5,451 H231.5 M228,450 L226.5,451 L228,452" stroke="#2a60c0" stroke-width="0.9" fill="none"/><rect x="235" y="452" width="6" height="4" fill="#a8b8c8"/><path d="M235.5,451 H240.5 M239,450 L240.5,451 L239,452" stroke="#2a60c0" stroke-width="0.9" fill="none"/><line x1="243.2" y1="448.5" x2="243.2" y2="457.5" stroke="#cfcfcf" stroke-width="0.7"/></svg><div class="a" style="left:1px;top:459px;width:10px;height:166px;background:#e6e6e6;border-right:1px solid #cfcfcf"></div><svg class="a" style="left:0;top:0;overflow:visible" width="600" height="687" viewBox="0 0 600 687"><defs><clipPath id="cp36"><rect x="0" y="459.0" width="600" height="166.0"/></clipPath></defs><g clip-path="url(#cp36)"><g transform="skewY(0.05)" font-family="Liberation Mono" font-size="4.530" fill="#3a3a3a" stroke="#3a3a3a" stroke-width="0.04" style="white-space:pre"><text x="6.32" y="463.402" textLength="2.72" lengthAdjust="spacingAndGlyphs">1</text><text x="6.32" y="468.172" textLength="2.72" lengthAdjust="spacingAndGlyphs">2</text><text x="6.32" y="472.942" textLength="2.72" lengthAdjust="spacingAndGlyphs">3</text><text x="6.32" y="477.712" textLength="2.72" lengthAdjust="spacingAndGlyphs">4</text><text x="6.32" y="482.482" textLength="2.72" lengthAdjust="spacingAndGlyphs">5</text><text x="6.32" y="487.252" textLength="2.72" lengthAdjust="spacingAndGlyphs">6</text><text x="6.32" y="492.022" textLength="2.72" lengthAdjust="spacingAndGlyphs">7</text><text x="6.32" y="496.792" textLength="2.72" lengthAdjust="spacingAndGlyphs">8</text><text x="6.32" y="501.562" textLength="2.72" lengthAdjust="spacingAndGlyphs">9</text><text x="3.60" y="506.332" textLength="5.44" lengthAdjust="spacingAndGlyphs">10</text><text x="3.60" y="511.102" textLength="5.44" lengthAdjust="spacingAndGlyphs">11</text><text x="3.60" y="515.872" textLength="5.44" lengthAdjust="spacingAndGlyphs">12</text><text x="3.60" y="520.642" textLength="5.44" lengthAdjust="spacingAndGlyphs">13</text><text x="3.60" y="525.412" textLength="5.44" lengthAdjust="spacingAndGlyphs">14</text><text x="3.60" y="530.182" textLength="5.44" lengthAdjust="spacingAndGlyphs">15</text><text x="3.60" y="534.952" textLength="5.44" lengthAdjust="spacingAndGlyphs">16</text><text x="3.60" y="539.722" textLength="5.44" lengthAdjust="spacingAndGlyphs">17</text><text x="3.60" y="544.492" textLength="5.44" lengthAdjust="spacingAndGlyphs">18</text><text x="3.60" y="549.262" textLength="5.44" lengthAdjust="spacingAndGlyphs">19</text><text x="3.60" y="554.032" textLength="5.44" lengthAdjust="spacingAndGlyphs">20</text><text x="3.60" y="558.802" textLength="5.44" lengthAdjust="spacingAndGlyphs">21</text><text x="3.60" y="563.572" textLength="5.44" lengthAdjust="spacingAndGlyphs">22</text><text x="3.60" y="568.342" textLength="5.44" lengthAdjust="spacingAndGlyphs">23</text><text x="3.60" y="573.112" textLength="5.44" lengthAdjust="spacingAndGlyphs">24</text><text x="3.60" y="577.882" textLength="5.44" lengthAdjust="spacingAndGlyphs">25</text><text x="3.60" y="582.652" textLength="5.44" lengthAdjust="spacingAndGlyphs">26</text><text x="3.60" y="587.422" textLength="5.44" lengthAdjust="spacingAndGlyphs">27</text><text x="3.60" y="592.192" textLength="5.44" lengthAdjust="spacingAndGlyphs">28</text><text x="3.60" y="596.962" textLength="5.44" lengthAdjust="spacingAndGlyphs">29</text><text x="3.60" y="601.732" textLength="5.44" lengthAdjust="spacingAndGlyphs">30</text><text x="3.60" y="606.502" textLength="5.44" lengthAdjust="spacingAndGlyphs">31</text><text x="3.60" y="611.272" textLength="5.44" lengthAdjust="spacingAndGlyphs">32</text><text x="3.60" y="616.042" textLength="5.44" lengthAdjust="spacingAndGlyphs">33</text><text x="3.60" y="620.812" textLength="5.44" lengthAdjust="spacingAndGlyphs">34</text><text x="3.60" y="625.582" textLength="5.44" lengthAdjust="spacingAndGlyphs">35</text></g></g></svg><div class="a" style="left:69.88px;top:488.82px;width:5.44px;height:4.37px;background:#f4f080"></div><svg class="a" style="left:0;top:0;overflow:visible" width="600" height="687" viewBox="0 0 600 687"><defs><clipPath id="cp124"><rect x="0" y="459.0" width="600" height="166.0"/></clipPath></defs><g clip-path="url(#cp124)"><g transform="skewY(0.05)" font-family="Liberation Mono" font-size="4.530" fill="#000" stroke="#000" stroke-width="0.04" style="white-space:pre"><text x="12.40" y="463.394" textLength="59.80" lengthAdjust="spacingAndGlyphs"><tspan fill="#2a3ad0" stroke="#2a3ad0"># -*- coding: mbcs -*-</tspan></text><text x="12.40" y="468.164" textLength="114.16" lengthAdjust="spacingAndGlyphs"><tspan fill="#2a3ad0" stroke="#2a3ad0"># Do not delete the following import lines</tspan></text><text x="12.40" y="472.934" textLength="54.36" lengthAdjust="spacingAndGlyphs"><tspan fill="#ee9438" stroke="#ee9438">from</tspan> abaqus <tspan fill="#ee9438" stroke="#ee9438">import</tspan> *</text><text x="12.40" y="477.704" textLength="78.82" lengthAdjust="spacingAndGlyphs"><tspan fill="#ee9438" stroke="#ee9438">from</tspan> abaqusConstants <tspan fill="#ee9438" stroke="#ee9438">import</tspan> *</text><text x="12.40" y="482.474" textLength="40.77" lengthAdjust="spacingAndGlyphs"><tspan fill="#ee9438" stroke="#ee9438">import</tspan> __main__</text><text x="12.40" y="492.014" textLength="65.23" lengthAdjust="spacingAndGlyphs"><tspan fill="#ee9438" stroke="#ee9438">def</tspan> modifyMeshDensity():</text><text x="23.27" y="496.784" textLength="38.05" lengthAdjust="spacingAndGlyphs"><tspan fill="#ee9438" stroke="#ee9438">import</tspan> section</text><text x="23.27" y="501.554" textLength="54.36" lengthAdjust="spacingAndGlyphs"><tspan fill="#ee9438" stroke="#ee9438">import</tspan> regionToolset</text><text x="23.27" y="506.324" textLength="97.85" lengthAdjust="spacingAndGlyphs"><tspan fill="#ee9438" stroke="#ee9438">import</tspan> displayGroupMdbToolset <tspan fill="#ee9438" stroke="#ee9438">as</tspan> dgm</text><text x="23.27" y="511.094" textLength="29.90" lengthAdjust="spacingAndGlyphs"><tspan fill="#ee9438" stroke="#ee9438">import</tspan> part</text><text x="23.27" y="515.864" textLength="40.77" lengthAdjust="spacingAndGlyphs"><tspan fill="#ee9438" stroke="#ee9438">import</tspan> material</text><text x="23.27" y="520.634" textLength="40.77" lengthAdjust="spacingAndGlyphs"><tspan fill="#ee9438" stroke="#ee9438">import</tspan> assembly</text><text x="23.27" y="525.404" textLength="29.90" lengthAdjust="spacingAndGlyphs"><tspan fill="#ee9438" stroke="#ee9438">import</tspan> step</text><text x="23.27" y="530.174" textLength="48.92" lengthAdjust="spacingAndGlyphs"><tspan fill="#ee9438" stroke="#ee9438">import</tspan> interaction</text><text x="23.27" y="534.944" textLength="29.90" lengthAdjust="spacingAndGlyphs"><tspan fill="#ee9438" stroke="#ee9438">import</tspan> load</text><text x="23.27" y="539.714" textLength="29.90" lengthAdjust="spacingAndGlyphs"><tspan fill="#ee9438" stroke="#ee9438">import</tspan> mesh</text><text x="23.27" y="544.484" textLength="51.64" lengthAdjust="spacingAndGlyphs"><tspan fill="#ee9438" stroke="#ee9438">import</tspan> optimization</text><text x="23.27" y="549.254" textLength="27.18" lengthAdjust="spacingAndGlyphs"><tspan fill="#ee9438" stroke="#ee9438">import</tspan> job</text><text x="23.27" y="554.024" textLength="35.33" lengthAdjust="spacingAndGlyphs"><tspan fill="#ee9438" stroke="#ee9438">import</tspan> sketch</text><text x="23.27" y="558.794" textLength="54.36" lengthAdjust="spacingAndGlyphs"><tspan fill="#ee9438" stroke="#ee9438">import</tspan> visualization</text><text x="23.27" y="563.564" textLength="35.33" lengthAdjust="spacingAndGlyphs"><tspan fill="#ee9438" stroke="#ee9438">import</tspan> xyPlot</text><text x="23.27" y="568.334" textLength="97.85" lengthAdjust="spacingAndGlyphs"><tspan fill="#ee9438" stroke="#ee9438">import</tspan> displayGroupOdbToolset <tspan fill="#ee9438" stroke="#ee9438">as</tspan> dgo</text><text x="23.27" y="573.104" textLength="65.23" lengthAdjust="spacingAndGlyphs"><tspan fill="#ee9438" stroke="#ee9438">import</tspan> connectorBehavior</text><text x="23.27" y="577.874" textLength="106.00" lengthAdjust="spacingAndGlyphs">p = mdb.models[<tspan fill="#22a040" stroke="#22a040">&#x27;Model-1&#x27;</tspan>].parts[<tspan fill="#22a040" stroke="#22a040">&#x27;beam&#x27;</tspan>]</text><text x="23.27" y="582.644" textLength="38.05" lengthAdjust="spacingAndGlyphs">p.deleteMesh()</text><text x="23.27" y="587.414" textLength="106.00" lengthAdjust="spacingAndGlyphs">p = mdb.models[<tspan fill="#22a040" stroke="#22a040">&#x27;Model-1&#x27;</tspan>].parts[<tspan fill="#22a040" stroke="#22a040">&#x27;beam&#x27;</tspan>]</text><text x="23.27" y="592.184" textLength="163.08" lengthAdjust="spacingAndGlyphs">p.seedPart(size=1.0, deviationFactor=0.1, minSizeFactor=0.1)</text><text x="23.27" y="596.954" textLength="106.00" lengthAdjust="spacingAndGlyphs">p = mdb.models[<tspan fill="#22a040" stroke="#22a040">&#x27;Model-1&#x27;</tspan>].parts[<tspan fill="#22a040" stroke="#22a040">&#x27;beam&#x27;</tspan>]</text><text x="23.27" y="601.724" textLength="43.49" lengthAdjust="spacingAndGlyphs">p.generateMesh()</text><text x="23.27" y="606.494" textLength="103.28" lengthAdjust="spacingAndGlyphs">a = mdb.models[<tspan fill="#22a040" stroke="#22a040">&#x27;Model-1&#x27;</tspan>].rootAssembly</text><text x="23.27" y="611.264" textLength="38.05" lengthAdjust="spacingAndGlyphs">a.regenerate()</text><text x="23.27" y="616.034" textLength="165.80" lengthAdjust="spacingAndGlyphs">session.viewports[<tspan fill="#22a040" stroke="#22a040">&#x27;Viewport: 1&#x27;</tspan>].setValues(displayedObject=a)</text><text x="23.27" y="620.804" textLength="103.28" lengthAdjust="spacingAndGlyphs">a = mdb.models[<tspan fill="#22a040" stroke="#22a040">&#x27;Model-1&#x27;</tspan>].rootAssembly</text><text x="23.27" y="625.574" textLength="38.05" lengthAdjust="spacingAndGlyphs">a.regenerate()</text></g></g></svg><div class="a" style="left:309px;top:459px;width:7px;height:166px;background:#f4f4f4"></div><div class="a" style="left:310px;top:466px;width:5.5px;height:144px;background:linear-gradient(90deg,#e2e2e2,#d0d0d0);border:0.6px solid #bcbcbc;border-radius:1px"></div><svg class="a" style="left:0;top:0" width="600" height="687"><path d="M311.2,620.8 L314.2,620.8 L312.7,622.6 Z" fill="#333"/><path d="M311.2,463.2 L314.2,463.2 L312.7,461.4 Z" fill="#333"/></svg><div class="a" style="left:316px;top:428px;width:1px;height:57px;background:#a8b6c4"></div><div class="a" style="left:316px;top:485px;width:1px;height:140px;background:#5e6e7e"></div><div class="a" style="left:331.50px;top:523.15px;width:58.50px;height:5.25px;background:#74e2c4"></div><svg class="a" style="left:0;top:0;overflow:visible" width="600" height="687" viewBox="0 0 600 687"><g transform="skewY(0.05)" font-family="Liberation Mono" font-size="5.360" fill="#000" stroke="#000" stroke-width="0.08" style="white-space:pre"><text x="332.00" y="479.476" textLength="64.32" lengthAdjust="spacingAndGlyphs"><tspan fill="#ee9438" stroke="#ee9438">from</tspan> abaqus <tspan fill="#ee9438" stroke="#ee9438">import</tspan> *</text><text x="332.00" y="484.726" textLength="93.26" lengthAdjust="spacingAndGlyphs"><tspan fill="#ee9438" stroke="#ee9438">from</tspan> abaqusConstants <tspan fill="#ee9438" stroke="#ee9438">import</tspan> *</text><text x="332.00" y="489.976" textLength="77.18" lengthAdjust="spacingAndGlyphs"><tspan fill="#ee9438" stroke="#ee9438">from</tspan> caeModules <tspan fill="#ee9438" stroke="#ee9438">import</tspan> *</text><text x="332.00" y="500.476" textLength="115.78" lengthAdjust="spacingAndGlyphs">openMdb(pathName=<tspan fill="#22a040" stroke="#22a040">&#x27;H:/Temp/beam.cae&#x27;</tspan>)</text><text x="332.00" y="505.726" textLength="125.42" lengthAdjust="spacingAndGlyphs">p = mdb.models[<tspan fill="#22a040" stroke="#22a040">&#x27;Model-1&#x27;</tspan>].parts[<tspan fill="#22a040" stroke="#22a040">&#x27;beam&#x27;</tspan>]</text><text x="332.00" y="516.226" textLength="122.21" lengthAdjust="spacingAndGlyphs">meshSizes = [10.0, 5.0, 2.5, 1.0, 0.5]</text><text x="332.00" y="521.476" textLength="83.62" lengthAdjust="spacingAndGlyphs"><tspan fill="#ee9438" stroke="#ee9438">for</tspan> meshSize <tspan fill="#ee9438" stroke="#ee9438">in</tspan> meshSizes:</text><text x="344.86" y="526.726" textLength="45.02" lengthAdjust="spacingAndGlyphs">p.deleteMesh()</text><text x="344.86" y="531.976" textLength="209.04" lengthAdjust="spacingAndGlyphs">p.seedPart(size=meshSize, deviationFactor=0.1, minSizeFactor=0.1)</text><text x="344.86" y="537.226" textLength="51.46" lengthAdjust="spacingAndGlyphs">p.generateMesh()</text><text x="344.86" y="542.476" textLength="122.21" lengthAdjust="spacingAndGlyphs">a = mdb.models[<tspan fill="#22a040" stroke="#22a040">&#x27;Model-1&#x27;</tspan>].rootAssembly</text><text x="344.86" y="547.726" textLength="45.02" lengthAdjust="spacingAndGlyphs">a.regenerate()</text><text x="344.86" y="552.976" textLength="115.78" lengthAdjust="spacingAndGlyphs">myName = <tspan fill="#22a040" stroke="#22a040">&#x27;elSize&#x27;</tspan>+str(int(meshSize))</text><text x="344.86" y="558.226" textLength="218.69" lengthAdjust="spacingAndGlyphs">mdb.Job(name=myName, model=<tspan fill="#22a040" stroke="#22a040">&#x27;Model-1&#x27;</tspan>, description=<tspan fill="#22a040" stroke="#22a040">&#x27;&#x27;</tspan>, type=ANALYSIS,</text><text x="357.73" y="563.476" textLength="202.61" lengthAdjust="spacingAndGlyphs">atTime=None, waitMinutes=0, waitHours=0, queue=None, memory=90,</text><text x="357.73" y="568.726" textLength="164.02" lengthAdjust="spacingAndGlyphs">memoryUnits=PERCENTAGE, getMemoryFromAnalysis=True,</text><text x="357.73" y="573.976" textLength="221.90" lengthAdjust="spacingAndGlyphs">explicitPrecision=SINGLE, nodalOutputPrecision=SINGLE, echoPrint=OFF,</text><text x="357.73" y="579.226" textLength="225.12" lengthAdjust="spacingAndGlyphs">modelPrint=OFF, contactPrint=OFF, historyPrint=OFF, userSubroutine=<tspan fill="#22a040" stroke="#22a040">&#x27;&#x27;</tspan>,</text><text x="357.73" y="584.476" textLength="225.12" lengthAdjust="spacingAndGlyphs">scratch=<tspan fill="#22a040" stroke="#22a040">&#x27;&#x27;</tspan>, resultsFormat=ODB, multiprocessingMode=DEFAULT, numCpus=1,</text><text x="357.73" y="589.726" textLength="32.16" lengthAdjust="spacingAndGlyphs">numGPUs=0)</text><text x="344.86" y="594.976" textLength="167.23" lengthAdjust="spacingAndGlyphs">mdb.jobs[myName].writeInput(consistencyChecking=OFF)</text><text x="344.86" y="600.226" textLength="157.58" lengthAdjust="spacingAndGlyphs"><tspan fill="#2a3ad0" stroke="#2a3ad0">#mdb.jobs[myName].submit(consistencyChecking=OFF)</tspan></text></g></svg><div class="a" style="left:0;top:625px;width:600px;height:1px;background:#767676"></div></body></html>
